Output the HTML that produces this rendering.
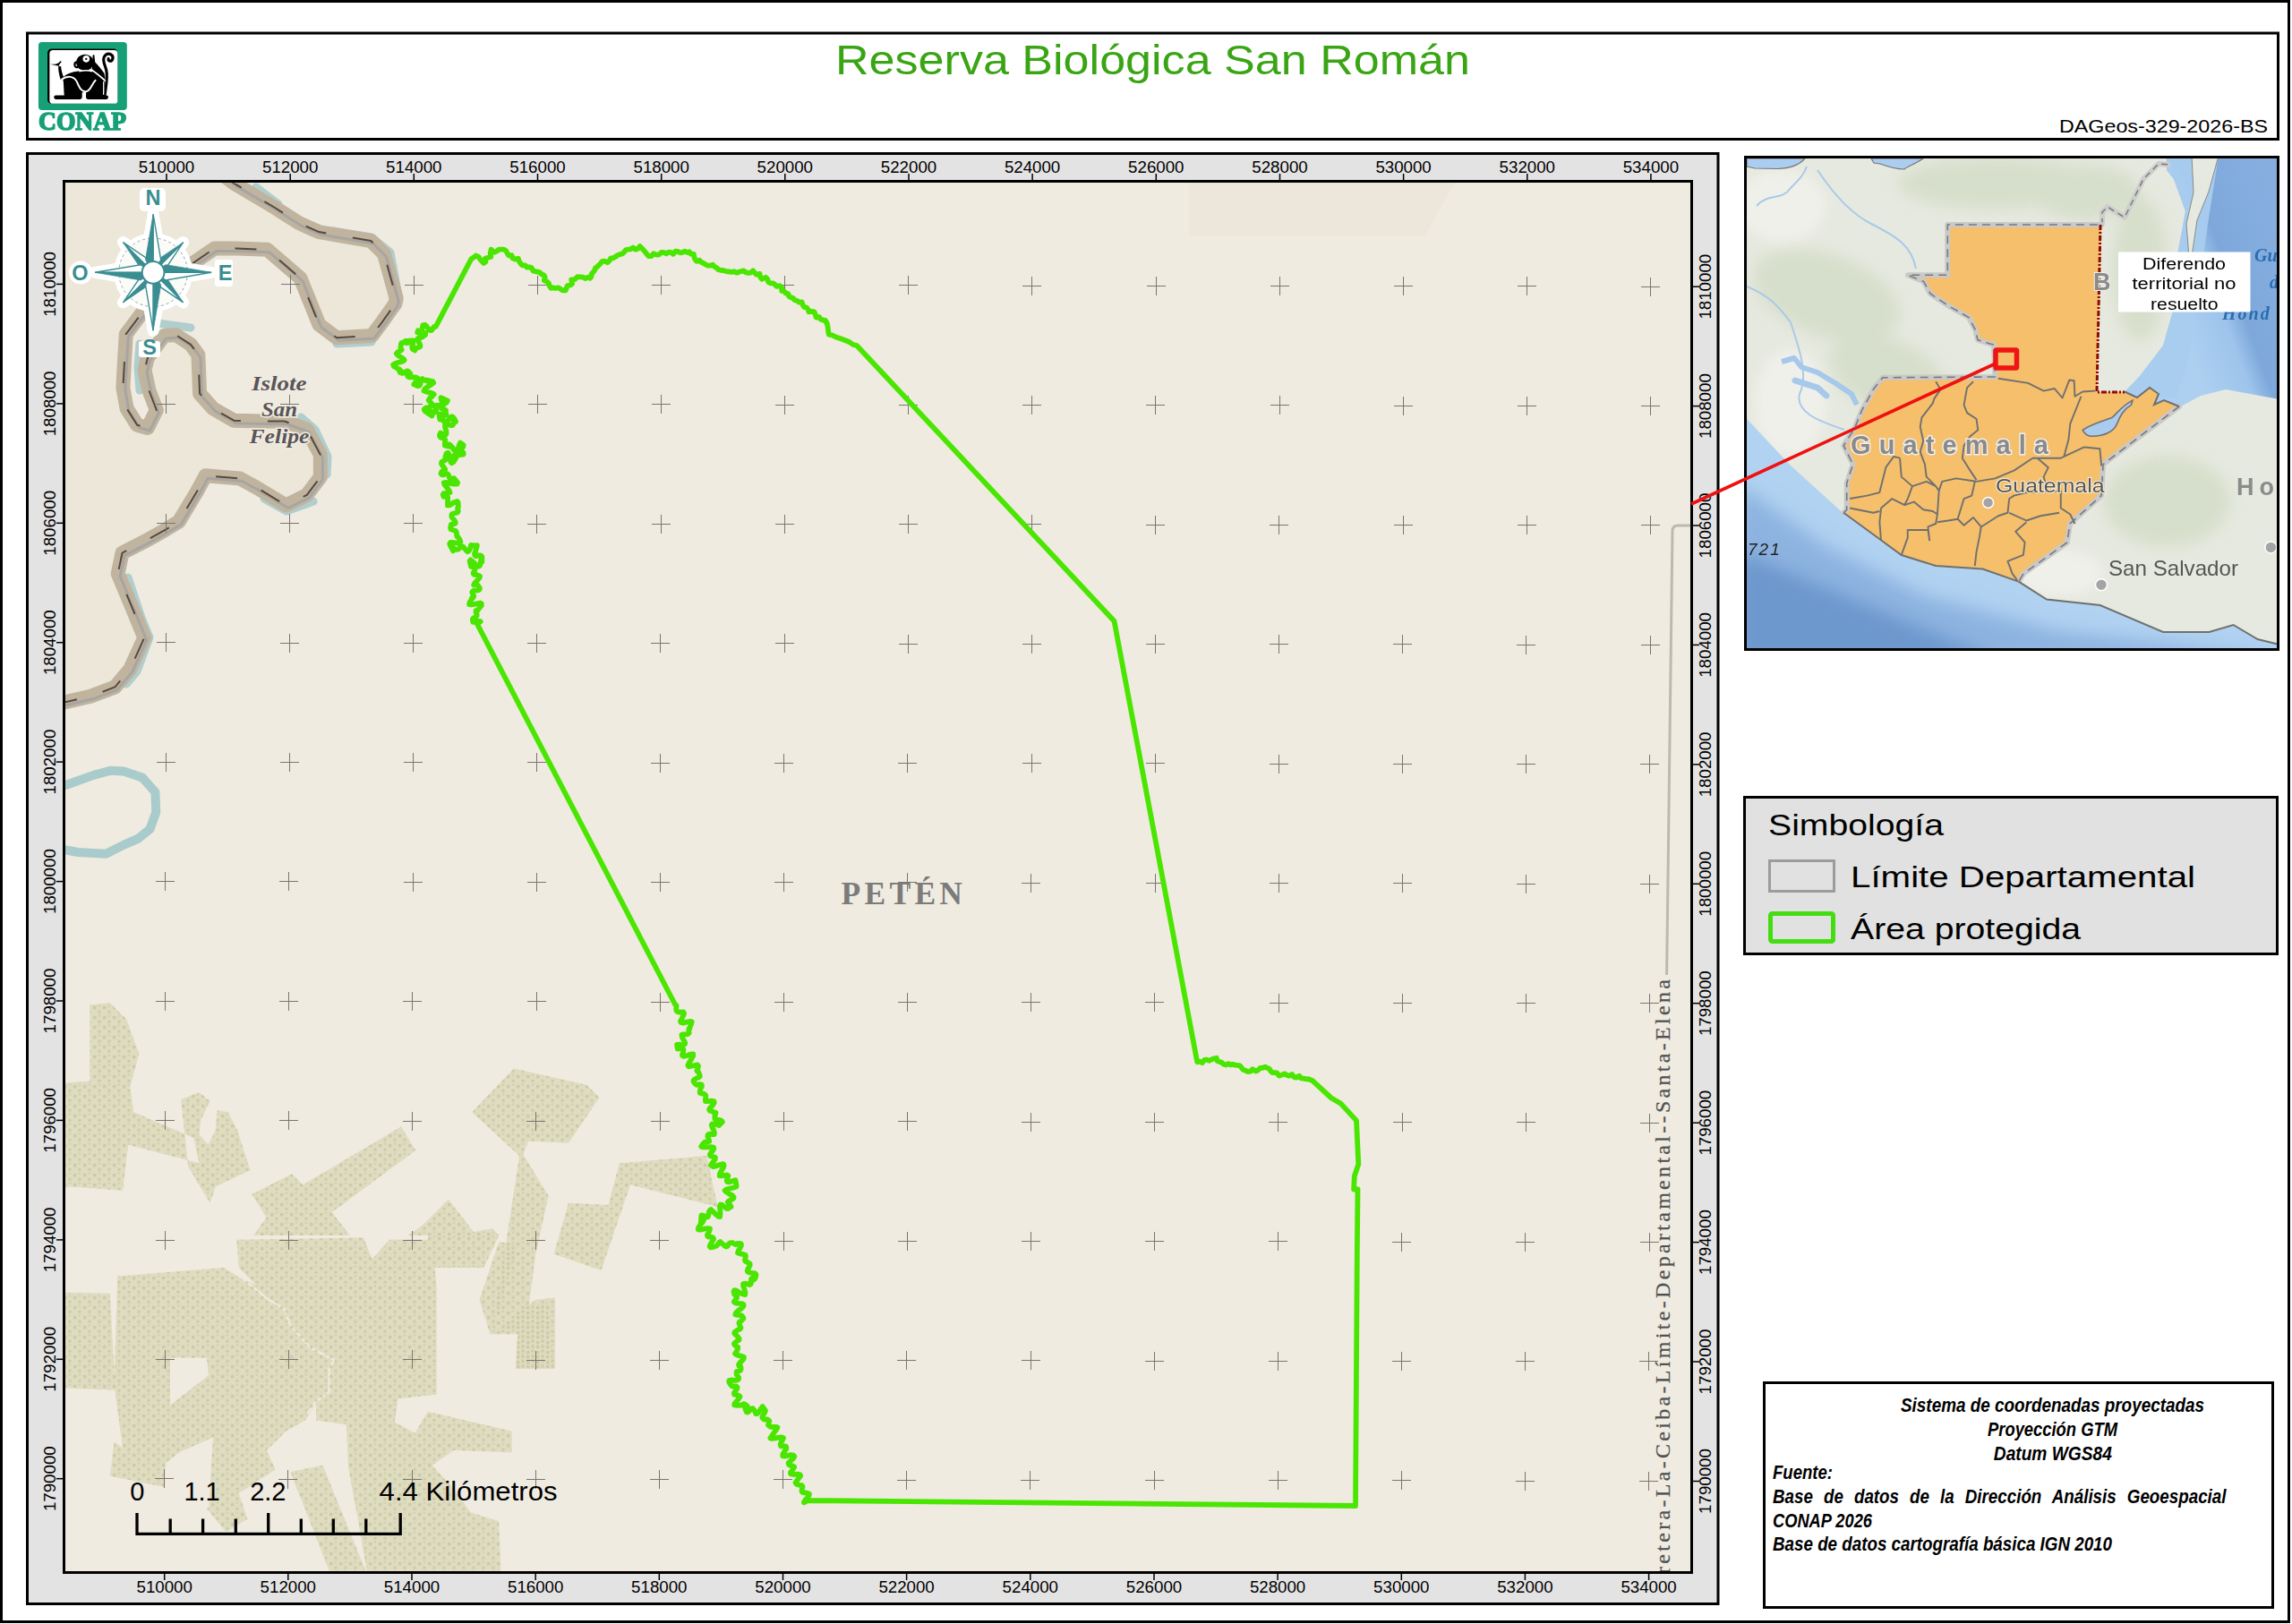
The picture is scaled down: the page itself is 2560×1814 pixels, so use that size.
<!DOCTYPE html>
<html><head><meta charset="utf-8"><style>
html,body{margin:0;padding:0;background:#fff;overflow:hidden;}
svg{display:block;}
</style></head><body>
<svg width="2560" height="1814" viewBox="0 0 2560 1814">
<defs><pattern id="dots1" width="27.07" height="27.07" patternUnits="userSpaceOnUse"><rect x="2.46" y="4.92" width="7.87" height="7.87" fill="#cac89f"/><rect x="15.99" y="17.22" width="7.38" height="6.40" fill="#cac89f"/><rect x="17.22" y="1.23" width="4.92" height="4.92" fill="#cfcda6"/></pattern><pattern id="dots2" width="45.84" height="45.84" patternUnits="userSpaceOnUse"><rect x="4.17" y="8.33" width="13.33" height="13.33" fill="#cac89f"/><rect x="27.09" y="29.17" width="12.50" height="10.83" fill="#cac89f"/><rect x="29.17" y="2.08" width="8.33" height="8.33" fill="#cfcda6"/></pattern></defs><rect x="0" y="0" width="2560" height="1814" fill="#ffffff"/>
<rect x="1.5" y="1.5" width="2555" height="1810" fill="none" stroke="#000" stroke-width="3"/>
<rect x="30.5" y="37" width="2514" height="118.5" fill="#fff" stroke="#000" stroke-width="3"/>
<text x="933" y="82.8" font-family='"Liberation Sans", sans-serif' font-size="46" fill="#3aa514" textLength="709" lengthAdjust="spacingAndGlyphs">Reserva Biológica San Román</text>
<text x="2300" y="147.8" font-family='"Liberation Sans", sans-serif' font-size="21" fill="#000" textLength="233" lengthAdjust="spacingAndGlyphs">DAGeos-329-2026-BS</text>
<rect x="30.5" y="171.5" width="1888.5" height="1620" fill="#e4e3e4" stroke="#000" stroke-width="3"/>
<defs><clipPath id="mapclip"><rect x="73" y="204" width="1815" height="1551"/></clipPath></defs>
<g clip-path="url(#mapclip)">
<rect x="73" y="204" width="1815" height="1551" fill="#efebe0"/>
<path d="M73.0,204.0 L250.0,196.0 L261.6,204.9 L307.1,232.0 L334.2,249.3 L347.8,255.4 L356.4,259.1 L414.3,269.0 L429.0,283.7 L442.6,333.0 L441.4,339.2 L426.6,360.1 L415.5,374.9 L376.1,377.3 L356.4,362.6 L335.5,310.8 L298.5,278.8 L264.0,277.6 L239.4,277.6 L216.0,293.6 L158.2,350.0 L140.8,373.2 L139.1,401.5 L137.4,433.1 L141.6,456.4 L153.2,474.7 L164.9,478.0 L174.8,458.0 L166.5,436.4 L161.5,413.1 L164.9,399.8 L183.2,374.9 L196.5,374.1 L213.1,384.9 L221.4,396.5 L223.1,439.7 L238.0,456.4 L261.3,469.7 L292.9,470.5 L317.8,470.5 L342.8,479.7 L357.8,507.9 L357.8,532.9 L342.8,552.8 L319.5,564.5 L286.3,544.5 L268.0,534.5 L229.7,531.2 L219.7,549.5 L199.8,582.7 L183.2,592.7 L161.3,604.9 L136.5,617.7 L131.7,640.9 L144.5,671.3 L161.3,712.2 L145.3,747.4 L128.5,767.4 L101.2,777.8 L70.0,785.0 L60.0,787.0 L73.0,787.0Z" fill="#e8e2d1" opacity="0.45"/>
<path d="M1328,204 L1625,204 L1591,264 L1328,264 Z" fill="#e8e2d2" opacity="0.4"/>
<defs><clipPath id="vegTop"><rect x="0" y="0" width="2000" height="1380"/></clipPath><clipPath id="vegBot"><rect x="0" y="1380" width="2000" height="500"/></clipPath></defs>
<g clip-path="url(#vegTop)"><g transform="translate(70,1100) scale(0.40642)"><path d="M75.0,55.0 L130.0,50.0 L175.0,95.0 L210.0,190.0 L185.0,280.0 L195.0,350.0 L360.0,420.0 L375.0,490.0 L180.0,440.0 L165.0,565.0 L20.0,555.0 L0.0,560.0 L0.0,270.0 L75.0,265.0ZM325.0,315.0 L375.0,295.0 L405.0,320.0 L380.0,370.0 L375.0,410.0 L400.0,440.0 L420.0,400.0 L425.0,345.0 L455.0,350.0 L480.0,400.0 L515.0,510.0 L420.0,555.0 L405.0,600.0 L345.0,500.0ZM480.0,700.0 L520.0,695.0 L560.0,640.0 L520.0,575.0 L630.0,520.0 L660.0,550.0 L930.0,390.0 L970.0,455.0 L740.0,625.0 L840.0,755.0 L880.0,740.0 L990.0,660.0 L1060.0,590.0 L1130.0,680.0 L1180.0,670.0 L1210.0,700.0 L1200.0,760.0 L480.0,760.0ZM1030.0,700.0 L1110.0,720.0 L1110.0,740.0 L1040.0,730.0ZM710.0,715.0 L745.0,715.0 L745.0,735.0 L710.0,735.0Z" fill="#dedcc1" fill-rule="evenodd"/></g></g>
<g transform="translate(70,1100) scale(0.40642)"><path d="M1240.0,230.0 L1440.0,275.0 L1475.0,310.0 L1390.0,435.0 L1280.0,430.0 L1265.0,465.0 L1335.0,580.0 L1300.0,740.0 L1280.0,890.0 L1330.0,870.0 L1350.0,1055.0 L1245.0,1055.0 L1250.0,960.0 L1180.0,960.0 L1200.0,830.0 L1240.0,570.0 L1255.0,470.0 L1125.0,350.0ZM1350.0,740.0 L1390.0,600.0 L1500.0,605.0 L1530.0,490.0 L1770.0,470.0 L1800.0,610.0 L1560.0,550.0 L1480.0,785.0Z" fill="#dedcc1"/></g>
<g clip-path="url(#vegBot)"><g transform="translate(70,1380) scale(0.23998)"><path d="M0.0,265.0 L220.0,270.0 L245.0,720.0 L0.0,710.0ZM255.0,190.0 L750.0,150.0 L830.0,200.0 L1030.0,340.0 L1060.0,430.0 L1140.0,510.0 L1270.0,580.0 L1240.0,620.0 L1240.0,730.0 L1180.0,780.0 L1130.0,860.0 L1040.0,910.0 L950.0,1000.0 L990.0,1090.0 L820.0,1200.0 L680.0,1270.0 L700.0,940.0 L540.0,1010.0 L480.0,1060.0 L470.0,1170.0 L220.0,1120.0 L240.0,960.0 L280.0,990.0 L240.0,700.0ZM810.0,20.0 L1400.0,10.0 L1440.0,110.0 L1520.0,20.0 L1720.0,20.0 L1740.0,240.0 L1740.0,740.0 L1560.0,760.0 L1545.0,870.0 L1640.0,920.0 L1700.0,820.0 L2090.0,910.0 L2090.0,1010.0 L1820.0,1000.0 L1720.0,1070.0 L1810.0,1170.0 L1900.0,1290.0 L2030.0,1330.0 L2040.0,1584.0 L1420.0,1584.0 L1370.0,1300.0 L1330.0,1080.0 L1320.0,880.0 L1180.0,860.0 L1180.0,780.0 L1240.0,730.0 L1240.0,620.0 L1270.0,580.0 L1140.0,510.0 L1060.0,430.0 L1030.0,340.0 L830.0,200.0 L900.0,230.0 L820.0,150.0ZM1060.0,1100.0 L1210.0,1070.0 L1420.0,1584.0 L1250.0,1584.0ZM670.0,1270.0 L820.0,1200.0 L860.0,1320.0 L760.0,1380.0ZM2030.0,30.0 L2120.0,40.0 L1995.0,460.0 L2200.0,300.0 L2292.0,290.0 L2292.0,620.0 L2110.0,620.0 L2120.0,440.0 L1990.0,460.0 L1940.0,300.0ZM1700.0,0.0 L2030.0,0.0 L1960.0,150.0 L1690.0,150.0ZM500.0,570.0 L670.0,570.0 L680.0,650.0 L500.0,790.0ZM1200.0,40.0 L1260.0,45.0 L1255.0,80.0 L1200.0,75.0Z" fill="#dedcc1" fill-rule="nonzero"/><path d="M500.0,570.0 L670.0,570.0 L680.0,650.0 L500.0,790.0Z" fill="#efebe0"/><path d="M830.0,195.0 L960.0,300.0 L1030.0,340.0 L1060.0,420.0 L1150.0,520.0 L1265.0,580.0 L1240.0,620.0 L1240.0,730.0 L1180.0,770.0 L1140.0,830.0" fill="none" stroke="#efebe0" stroke-width="9"/></g></g>
<g clip-path="url(#vegTop)" opacity="0.9"><g transform="translate(70,1100) scale(0.40642)"><path d="M75.0,55.0 L130.0,50.0 L175.0,95.0 L210.0,190.0 L185.0,280.0 L195.0,350.0 L360.0,420.0 L375.0,490.0 L180.0,440.0 L165.0,565.0 L20.0,555.0 L0.0,560.0 L0.0,270.0 L75.0,265.0ZM325.0,315.0 L375.0,295.0 L405.0,320.0 L380.0,370.0 L375.0,410.0 L400.0,440.0 L420.0,400.0 L425.0,345.0 L455.0,350.0 L480.0,400.0 L515.0,510.0 L420.0,555.0 L405.0,600.0 L345.0,500.0ZM480.0,700.0 L520.0,695.0 L560.0,640.0 L520.0,575.0 L630.0,520.0 L660.0,550.0 L930.0,390.0 L970.0,455.0 L740.0,625.0 L840.0,755.0 L880.0,740.0 L990.0,660.0 L1060.0,590.0 L1130.0,680.0 L1180.0,670.0 L1210.0,700.0 L1200.0,760.0 L480.0,760.0ZM1030.0,700.0 L1110.0,720.0 L1110.0,740.0 L1040.0,730.0ZM710.0,715.0 L745.0,715.0 L745.0,735.0 L710.0,735.0Z" fill="url(#dots1)" fill-rule="evenodd"/></g></g>
<g opacity="0.9"><g transform="translate(70,1100) scale(0.40642)"><path d="M1240.0,230.0 L1440.0,275.0 L1475.0,310.0 L1390.0,435.0 L1280.0,430.0 L1265.0,465.0 L1335.0,580.0 L1300.0,740.0 L1280.0,890.0 L1330.0,870.0 L1350.0,1055.0 L1245.0,1055.0 L1250.0,960.0 L1180.0,960.0 L1200.0,830.0 L1240.0,570.0 L1255.0,470.0 L1125.0,350.0ZM1350.0,740.0 L1390.0,600.0 L1500.0,605.0 L1530.0,490.0 L1770.0,470.0 L1800.0,610.0 L1560.0,550.0 L1480.0,785.0Z" fill="url(#dots1)"/></g></g>
<g clip-path="url(#vegBot)" opacity="0.9"><g transform="translate(70,1380) scale(0.23998)"><path d="M0.0,265.0 L220.0,270.0 L245.0,720.0 L0.0,710.0ZM255.0,190.0 L750.0,150.0 L830.0,200.0 L1030.0,340.0 L1060.0,430.0 L1140.0,510.0 L1270.0,580.0 L1240.0,620.0 L1240.0,730.0 L1180.0,780.0 L1130.0,860.0 L1040.0,910.0 L950.0,1000.0 L990.0,1090.0 L820.0,1200.0 L680.0,1270.0 L700.0,940.0 L540.0,1010.0 L480.0,1060.0 L470.0,1170.0 L220.0,1120.0 L240.0,960.0 L280.0,990.0 L240.0,700.0ZM810.0,20.0 L1400.0,10.0 L1440.0,110.0 L1520.0,20.0 L1720.0,20.0 L1740.0,240.0 L1740.0,740.0 L1560.0,760.0 L1545.0,870.0 L1640.0,920.0 L1700.0,820.0 L2090.0,910.0 L2090.0,1010.0 L1820.0,1000.0 L1720.0,1070.0 L1810.0,1170.0 L1900.0,1290.0 L2030.0,1330.0 L2040.0,1584.0 L1420.0,1584.0 L1370.0,1300.0 L1330.0,1080.0 L1320.0,880.0 L1180.0,860.0 L1180.0,780.0 L1240.0,730.0 L1240.0,620.0 L1270.0,580.0 L1140.0,510.0 L1060.0,430.0 L1030.0,340.0 L830.0,200.0 L900.0,230.0 L820.0,150.0ZM1060.0,1100.0 L1210.0,1070.0 L1420.0,1584.0 L1250.0,1584.0ZM670.0,1270.0 L820.0,1200.0 L860.0,1320.0 L760.0,1380.0ZM2030.0,30.0 L2120.0,40.0 L1995.0,460.0 L2200.0,300.0 L2292.0,290.0 L2292.0,620.0 L2110.0,620.0 L2120.0,440.0 L1990.0,460.0 L1940.0,300.0ZM1700.0,0.0 L2030.0,0.0 L1960.0,150.0 L1690.0,150.0ZM500.0,570.0 L670.0,570.0 L680.0,650.0 L500.0,790.0ZM1200.0,40.0 L1260.0,45.0 L1255.0,80.0 L1200.0,75.0Z" fill="url(#dots2)"/><path d="M500.0,570.0 L670.0,570.0 L680.0,650.0 L500.0,790.0Z" fill="#efebe0"/></g></g>
<path d="M60.0,881.0 L73.4,877.0 L104.5,865.9 L123.4,860.7 L138.1,861.6 L158.8,868.4 L173.4,884.8 L174.3,907.2 L167.4,926.2 L154.5,936.6 L139.0,943.4 L118.3,953.8 L87.2,952.0 L73.4,949.5 L60.0,948.0" fill="none" stroke="#a9cbcb" stroke-width="10" stroke-linejoin="round"/>
<path d="M286.0,209.0 L311.0,228.0" fill="none" stroke="#a8cbcb" stroke-width="9" stroke-linejoin="round" stroke-linecap="round" opacity="0.9"/>
<path d="M372.0,258.0 L415.0,265.0 L436.0,282.0 L446.0,335.0 L444.0,342.0" fill="none" stroke="#a8cbcb" stroke-width="9" stroke-linejoin="round" stroke-linecap="round" opacity="0.9"/>
<path d="M376.0,384.0 L415.0,382.0" fill="none" stroke="#a8cbcb" stroke-width="9" stroke-linejoin="round" stroke-linecap="round" opacity="0.9"/>
<path d="M176.0,361.0 L213.0,366.0" fill="none" stroke="#a8cbcb" stroke-width="9" stroke-linejoin="round" stroke-linecap="round" opacity="0.9"/>
<path d="M156.0,384.0 L154.0,410.0 L156.0,436.0" fill="none" stroke="#a8cbcb" stroke-width="9" stroke-linejoin="round" stroke-linecap="round" opacity="0.9"/>
<path d="M336.0,466.0 L352.0,480.0 L366.0,510.0 L365.0,530.0" fill="none" stroke="#a8cbcb" stroke-width="9" stroke-linejoin="round" stroke-linecap="round" opacity="0.9"/>
<path d="M295.0,557.0 L320.0,571.0 L350.0,560.0" fill="none" stroke="#a8cbcb" stroke-width="9" stroke-linejoin="round" stroke-linecap="round" opacity="0.9"/>
<path d="M143.0,645.0 L158.0,690.0 L167.0,712.0 L153.0,750.0 L141.0,764.0" fill="none" stroke="#a8cbcb" stroke-width="9" stroke-linejoin="round" stroke-linecap="round" opacity="0.9"/>
<path d="M250.0,196.0 L261.6,204.9 L307.1,232.0 L334.2,249.3 L347.8,255.4 L356.4,259.1 L414.3,269.0 L429.0,283.7 L442.6,333.0 L441.4,339.2 L426.6,360.1 L415.5,374.9 L376.1,377.3 L356.4,362.6 L335.5,310.8 L298.5,278.8 L264.0,277.6 L239.4,277.6 L216.0,293.6 L158.2,350.0 L140.8,373.2 L139.1,401.5 L137.4,433.1 L141.6,456.4 L153.2,474.7 L164.9,478.0 L174.8,458.0 L166.5,436.4 L161.5,413.1 L164.9,399.8 L183.2,374.9 L196.5,374.1 L213.1,384.9 L221.4,396.5 L223.1,439.7 L238.0,456.4 L261.3,469.7 L292.9,470.5 L317.8,470.5 L342.8,479.7 L357.8,507.9 L357.8,532.9 L342.8,552.8 L319.5,564.5 L286.3,544.5 L268.0,534.5 L229.7,531.2 L219.7,549.5 L199.8,582.7 L183.2,592.7 L161.3,604.9 L136.5,617.7 L131.7,640.9 L144.5,671.3 L161.3,712.2 L145.3,747.4 L128.5,767.4 L101.2,777.8 L70.0,785.0 L60.0,787.0" fill="none" stroke="#c0b49f" stroke-width="16" stroke-linejoin="round"/>
<path d="M250.0,196.0 L261.6,204.9 L307.1,232.0 L334.2,249.3 L347.8,255.4 L356.4,259.1 L414.3,269.0 L429.0,283.7 L442.6,333.0 L441.4,339.2 L426.6,360.1 L415.5,374.9 L376.1,377.3 L356.4,362.6 L335.5,310.8 L298.5,278.8 L264.0,277.6 L239.4,277.6 L216.0,293.6 L158.2,350.0 L140.8,373.2 L139.1,401.5 L137.4,433.1 L141.6,456.4 L153.2,474.7 L164.9,478.0 L174.8,458.0 L166.5,436.4 L161.5,413.1 L164.9,399.8 L183.2,374.9 L196.5,374.1 L213.1,384.9 L221.4,396.5 L223.1,439.7 L238.0,456.4 L261.3,469.7 L292.9,470.5 L317.8,470.5 L342.8,479.7 L357.8,507.9 L357.8,532.9 L342.8,552.8 L319.5,564.5 L286.3,544.5 L268.0,534.5 L229.7,531.2 L219.7,549.5 L199.8,582.7 L183.2,592.7 L161.3,604.9 L136.5,617.7 L131.7,640.9 L144.5,671.3 L161.3,712.2 L145.3,747.4 L128.5,767.4 L101.2,777.8 L70.0,785.0 L60.0,787.0" fill="none" stroke="#a7a5a2" stroke-width="3" stroke-linejoin="round" transform="translate(2.5,3)"/>
<path d="M250.0,196.0 L261.6,204.9 L307.1,232.0 L334.2,249.3 L347.8,255.4 L356.4,259.1 L414.3,269.0 L429.0,283.7 L442.6,333.0 L441.4,339.2 L426.6,360.1 L415.5,374.9 L376.1,377.3 L356.4,362.6 L335.5,310.8 L298.5,278.8 L264.0,277.6 L239.4,277.6 L216.0,293.6 L158.2,350.0 L140.8,373.2 L139.1,401.5 L137.4,433.1 L141.6,456.4 L153.2,474.7 L164.9,478.0 L174.8,458.0 L166.5,436.4 L161.5,413.1 L164.9,399.8 L183.2,374.9 L196.5,374.1 L213.1,384.9 L221.4,396.5 L223.1,439.7 L238.0,456.4 L261.3,469.7 L292.9,470.5 L317.8,470.5 L342.8,479.7 L357.8,507.9 L357.8,532.9 L342.8,552.8 L319.5,564.5 L286.3,544.5 L268.0,534.5 L229.7,531.2 L219.7,549.5 L199.8,582.7 L183.2,592.7 L161.3,604.9 L136.5,617.7 L131.7,640.9 L144.5,671.3 L161.3,712.2 L145.3,747.4 L128.5,767.4 L101.2,777.8 L70.0,785.0 L60.0,787.0" fill="none" stroke="#58483a" stroke-width="2" stroke-dasharray="24 30" stroke-linejoin="round"/>
<path d="M175.0,317.5h21M185.5,307.0v21M175.0,451.5h21M185.5,441.0v21M175.0,584.5h21M185.5,574.0v21M175.0,717.5h21M185.5,707.0v21M175.0,851.5h21M185.5,841.0v21M174.0,984.5h21M184.5,974.0v21M174.0,1118.5h21M184.5,1108.0v21M174.0,1251.5h21M184.5,1241.0v21M174.0,1385.5h21M184.5,1375.0v21M174.0,1518.5h21M184.5,1508.0v21M173.0,1651.5h21M183.5,1641.0v21M314.0,317.5h21M324.5,307.0v21M313.0,451.5h21M323.5,441.0v21M313.0,584.5h21M323.5,574.0v21M313.0,718.5h21M323.5,708.0v21M313.0,851.5h21M323.5,841.0v21M312.0,984.5h21M322.5,974.0v21M312.0,1118.5h21M322.5,1108.0v21M312.0,1251.5h21M322.5,1241.0v21M312.0,1385.5h21M322.5,1375.0v21M312.0,1518.5h21M322.5,1508.0v21M311.0,1652.5h21M321.5,1642.0v21M452.0,318.5h21M462.5,308.0v21M451.0,451.5h21M461.5,441.0v21M451.0,584.5h21M461.5,574.0v21M451.0,718.5h21M461.5,708.0v21M451.0,851.5h21M461.5,841.0v21M451.0,985.5h21M461.5,975.0v21M450.0,1118.5h21M460.5,1108.0v21M450.0,1252.5h21M460.5,1242.0v21M450.0,1385.5h21M460.5,1375.0v21M450.0,1518.5h21M460.5,1508.0v21M450.0,1652.5h21M460.5,1642.0v21M590.0,318.5h21M600.5,308.0v21M590.0,451.5h21M600.5,441.0v21M589.0,585.5h21M599.5,575.0v21M589.0,718.5h21M599.5,708.0v21M589.0,851.5h21M599.5,841.0v21M589.0,985.5h21M599.5,975.0v21M589.0,1118.5h21M599.5,1108.0v21M588.0,1252.5h21M598.5,1242.0v21M588.0,1385.5h21M598.5,1375.0v21M588.0,1519.5h21M598.5,1509.0v21M588.0,1652.5h21M598.5,1642.0v21M728.0,318.5h21M738.5,308.0v21M728.0,451.5h21M738.5,441.0v21M728.0,585.5h21M738.5,575.0v21M727.0,718.5h21M737.5,708.0v21M727.0,852.5h21M737.5,842.0v21M727.0,985.5h21M737.5,975.0v21M727.0,1119.5h21M737.5,1109.0v21M727.0,1252.5h21M737.5,1242.0v21M726.0,1385.5h21M736.5,1375.0v21M726.0,1519.5h21M736.5,1509.0v21M726.0,1652.5h21M736.5,1642.0v21M866.0,318.5h21M876.5,308.0v21M866.0,452.5h21M876.5,442.0v21M866.0,585.5h21M876.5,575.0v21M866.0,718.5h21M876.5,708.0v21M865.0,852.5h21M875.5,842.0v21M865.0,985.5h21M875.5,975.0v21M865.0,1119.5h21M875.5,1109.0v21M865.0,1252.5h21M875.5,1242.0v21M865.0,1386.5h21M875.5,1376.0v21M864.0,1519.5h21M874.5,1509.0v21M864.0,1652.5h21M874.5,1642.0v21M1004.0,318.5h21M1014.5,308.0v21M1004.0,452.5h21M1014.5,442.0v21M1004.0,585.5h21M1014.5,575.0v21M1004.0,719.5h21M1014.5,709.0v21M1003.0,852.5h21M1013.5,842.0v21M1003.0,985.5h21M1013.5,975.0v21M1003.0,1119.5h21M1013.5,1109.0v21M1003.0,1252.5h21M1013.5,1242.0v21M1003.0,1386.5h21M1013.5,1376.0v21M1002.0,1519.5h21M1012.5,1509.0v21M1002.0,1653.5h21M1012.5,1643.0v21M1142.0,319.5h21M1152.5,309.0v21M1142.0,452.5h21M1152.5,442.0v21M1142.0,585.5h21M1152.5,575.0v21M1142.0,719.5h21M1152.5,709.0v21M1142.0,852.5h21M1152.5,842.0v21M1141.0,986.5h21M1151.5,976.0v21M1141.0,1119.5h21M1151.5,1109.0v21M1141.0,1253.5h21M1151.5,1243.0v21M1141.0,1386.5h21M1151.5,1376.0v21M1141.0,1519.5h21M1151.5,1509.0v21M1140.0,1653.5h21M1150.5,1643.0v21M1281.0,319.5h21M1291.5,309.0v21M1280.0,452.5h21M1290.5,442.0v21M1280.0,586.5h21M1290.5,576.0v21M1280.0,719.5h21M1290.5,709.0v21M1280.0,852.5h21M1290.5,842.0v21M1280.0,986.5h21M1290.5,976.0v21M1279.0,1119.5h21M1289.5,1109.0v21M1279.0,1253.5h21M1289.5,1243.0v21M1279.0,1386.5h21M1289.5,1376.0v21M1279.0,1520.5h21M1289.5,1510.0v21M1279.0,1653.5h21M1289.5,1643.0v21M1419.0,319.5h21M1429.5,309.0v21M1419.0,452.5h21M1429.5,442.0v21M1418.0,586.5h21M1428.5,576.0v21M1418.0,719.5h21M1428.5,709.0v21M1418.0,853.5h21M1428.5,843.0v21M1418.0,986.5h21M1428.5,976.0v21M1418.0,1120.5h21M1428.5,1110.0v21M1417.0,1253.5h21M1427.5,1243.0v21M1417.0,1386.5h21M1427.5,1376.0v21M1417.0,1520.5h21M1427.5,1510.0v21M1417.0,1653.5h21M1427.5,1643.0v21M1557.0,319.5h21M1567.5,309.0v21M1557.0,453.5h21M1567.5,443.0v21M1557.0,586.5h21M1567.5,576.0v21M1556.0,719.5h21M1566.5,709.0v21M1556.0,853.5h21M1566.5,843.0v21M1556.0,986.5h21M1566.5,976.0v21M1556.0,1120.5h21M1566.5,1110.0v21M1556.0,1253.5h21M1566.5,1243.0v21M1555.0,1387.5h21M1565.5,1377.0v21M1555.0,1520.5h21M1565.5,1510.0v21M1555.0,1653.5h21M1565.5,1643.0v21M1695.0,319.5h21M1705.5,309.0v21M1695.0,453.5h21M1705.5,443.0v21M1695.0,586.5h21M1705.5,576.0v21M1694.0,720.5h21M1704.5,710.0v21M1694.0,853.5h21M1704.5,843.0v21M1694.0,987.5h21M1704.5,977.0v21M1694.0,1120.5h21M1704.5,1110.0v21M1694.0,1253.5h21M1704.5,1243.0v21M1693.0,1387.5h21M1703.5,1377.0v21M1693.0,1520.5h21M1703.5,1510.0v21M1693.0,1654.5h21M1703.5,1644.0v21M1833.0,320.5h21M1843.5,310.0v21M1833.0,453.5h21M1843.5,443.0v21M1833.0,586.5h21M1843.5,576.0v21M1833.0,720.5h21M1843.5,710.0v21M1832.0,853.5h21M1842.5,843.0v21M1832.0,987.5h21M1842.5,977.0v21M1832.0,1120.5h21M1842.5,1110.0v21M1832.0,1254.5h21M1842.5,1244.0v21M1832.0,1387.5h21M1842.5,1377.0v21M1831.0,1520.5h21M1841.5,1510.0v21M1831.0,1654.5h21M1841.5,1644.0v21" stroke="#7a766f" stroke-width="1" fill="none"/>
<text x="281" y="436.4" font-family='"Liberation Serif", serif' font-size="23" font-weight="bold" font-style="italic" fill="#59545a" stroke="#f0ece0" stroke-width="3" paint-order="stroke" lengthAdjust="spacingAndGlyphs" textLength="61.5">Islote</text><text x="292" y="465.3" font-family='"Liberation Serif", serif' font-size="23" font-weight="bold" font-style="italic" fill="#59545a" stroke="#f0ece0" stroke-width="3" paint-order="stroke" lengthAdjust="spacingAndGlyphs" textLength="40">San</text><text x="278.5" y="494.9" font-family='"Liberation Serif", serif' font-size="23" font-weight="bold" font-style="italic" fill="#59545a" stroke="#f0ece0" stroke-width="3" paint-order="stroke" lengthAdjust="spacingAndGlyphs" textLength="67">Felipe</text>
<text x="939.5" y="1010" font-family='"Liberation Serif", serif' font-size="35.5" font-weight="bold" fill="#7b7b7b" textLength="135.5" lengthAdjust="spacing">PETÉN</text>
<path d="M1889,587 L1874,587 Q1868,587 1868,593 L1861.6,1089" fill="none" stroke="#bcb9ae" stroke-width="3"/>
<text transform="translate(1865,1758) rotate(-90)" font-family='"Liberation Serif", serif' font-size="24" fill="#505050" stroke="#505050" stroke-width="0.25" textLength="664" lengthAdjust="spacing">retera-La-Ceiba-Límite-Departamental--Santa-Elena</text>
<path d="M486.7,364.8 L526.4,289.2 L529.1,287.5 L531.7,285.4 L534.7,287.1 L536.3,289.6 L538.3,291.9 L540.3,293.9 L542.5,292.3 L541.9,288.8 L545.1,287.8 L548.3,286.9 L547.7,283.4 L548.5,278.7 L552.0,281.7 L554.7,280.6 L557.3,278.6 L560.2,278.6 L562.9,278.6 L565.3,280.1 L566.5,282.8 L568.0,285.3 L571.6,285.2 L572.5,288.4 L575.2,289.5 L578.8,288.8 L579.9,292.0 L581.5,294.5 L583.5,296.3 L586.6,296.3 L588.5,298.5 L591.4,298.3 L593.8,299.3 L595.4,302.4 L598.0,303.1 L600.6,303.6 L603.1,304.5 L604.5,306.0 L607.4,307.3 L608.7,309.6 L607.8,313.3 L610.9,314.5 L612.9,316.4 L613.6,319.1 L615.4,321.8 L618.2,321.4 L620.7,322.0 L623.5,321.3 L625.9,322.7 L628.3,324.3 L631.8,324.3 L632.7,321.6 L633.8,319.0 L637.1,318.5 L639.1,316.8 L638.2,312.3 L641.9,312.2 L643.8,310.4 L645.1,309.2 L648.0,309.4 L650.9,309.6 L653.6,311.0 L656.8,309.7 L659.1,310.8 L660.6,308.7 L660.7,305.9 L662.6,304.0 L664.2,302.0 L664.9,299.5 L667.3,297.9 L668.5,296.5 L670.5,294.6 L672.3,292.1 L675.0,291.6 L678.5,293.2 L680.6,291.4 L682.2,288.5 L685.0,288.3 L687.4,286.8 L689.7,285.1 L692.3,284.1 L695.2,283.4 L697.3,281.4 L699.1,279.0 L702.0,278.5 L704.6,278.3 L707.0,276.5 L709.8,278.6 L712.4,277.9 L714.7,275.1 L717.1,277.3 L718.8,279.5 L720.8,281.5 L722.4,283.8 L724.7,286.2 L727.6,286.1 L730.1,283.3 L733.2,284.6 L736.1,284.4 L738.6,282.0 L741.6,282.0 L744.2,283.3 L746.7,281.6 L749.3,281.9 L752.0,283.8 L754.4,280.7 L757.0,280.9 L759.7,282.3 L762.3,281.9 L764.8,280.7 L767.5,282.0 L769.9,281.3 L771.3,283.5 L774.9,283.9 L775.3,287.0 L776.3,289.6 L778.2,291.8 L781.3,290.8 L783.3,292.9 L785.7,294.0 L787.9,295.3 L790.3,296.5 L793.0,296.7 L796.1,295.7 L798.0,297.9 L800.4,299.1 L802.4,301.1 L804.9,301.8 L807.6,302.0 L810.1,302.7 L812.4,303.3 L815.0,303.5 L817.6,303.9 L820.2,303.2 L822.8,304.6 L825.4,303.9 L828.0,302.9 L830.6,302.4 L833.2,304.4 L835.8,304.9 L838.4,304.6 L841.0,302.4 L843.0,304.8 L844.9,306.7 L848.5,305.9 L849.2,309.6 L850.9,311.8 L855.3,309.8 L857.2,311.6 L858.1,315.0 L860.4,316.3 L863.5,316.3 L865.6,317.9 L867.4,319.8 L870.9,319.2 L873.1,320.9 L873.2,324.9 L876.0,325.4 L877.6,327.6 L880.3,328.2 L881.3,331.1 L883.6,332.3 L886.0,333.3 L887.8,335.3 L890.5,336.0 L892.4,337.6 L895.7,337.5 L896.6,340.5 L898.0,342.9 L900.7,343.5 L902.5,345.5 L903.4,348.4 L907.1,347.8 L909.7,348.6 L910.7,351.5 L911.6,354.5 L915.1,354.1 L916.5,356.6 L918.9,357.5 L921.9,357.8 L923.0,360.6 L923.5,360.5 L924.5,364.7 L925.0,369.0 L925.7,373.6 L929.8,374.5 L933.6,376.5 L937.6,377.8 L941.6,379.2 L945.5,380.7 L949.4,382.5 L952.9,385.0 L957.0,386.0 L1244.5,693.7 L1337.2,1186.3 L1337.2,1186.1 L1339.8,1185.6 L1342.9,1187.2 L1345.0,1184.2 L1347.7,1183.6 L1350.7,1184.9 L1353.1,1183.4 L1355.7,1182.5 L1358.8,1181.8 L1359.5,1185.0 L1362.3,1186.1 L1364.4,1186.7 L1366.8,1188.8 L1369.3,1189.5 L1371.9,1188.1 L1374.4,1189.4 L1377.0,1188.9 L1379.4,1189.6 L1381.9,1189.8 L1384.8,1190.4 L1386.7,1192.6 L1388.6,1195.0 L1391.3,1195.8 L1393.9,1197.1 L1396.8,1196.7 L1399.0,1194.3 L1402.6,1196.5 L1405.2,1195.3 L1407.5,1193.0 L1410.4,1192.8 L1413.1,1191.7 L1415.5,1192.8 L1417.8,1193.9 L1419.2,1196.3 L1421.1,1198.0 L1423.5,1198.2 L1426.3,1198.5 L1428.7,1201.6 L1431.7,1200.8 L1434.6,1199.4 L1437.3,1200.9 L1440.0,1201.8 L1443.0,1200.1 L1445.3,1203.1 L1447.9,1203.6 L1451.2,1201.8 L1453.3,1204.4 L1456.0,1204.6 L1458.5,1205.3 L1461.3,1205.1 L1463.8,1206.3 L1466.3,1207.3 L1487.0,1226.5 L1497.3,1232.4 L1515.0,1251.6 L1517.3,1300.4 L1512.8,1313.7 L1512.1,1328.5 L1516.5,1328.5 L1516.5,1328.5 L1515.8,1400.0 L1514.0,1682.0 L902.5,1676.0 L897.9,1678.3 L898.9,1676.1 L901.7,1673.0 L903.4,1670.5 L903.9,1668.6 L902.0,1667.8 L899.7,1667.4 L896.6,1667.2 L895.6,1666.0 L895.5,1664.4 L896.0,1662.5 L896.5,1660.6 L895.8,1659.2 L893.2,1658.9 L890.8,1658.3 L889.2,1657.5 L888.5,1656.2 L890.4,1653.5 L892.5,1650.8 L894.2,1648.3 L893.4,1647.0 L890.9,1646.6 L886.3,1647.0 L883.2,1646.4 L882.9,1644.8 L884.8,1642.5 L886.2,1640.4 L887.2,1638.5 L885.4,1637.4 L882.4,1636.8 L880.9,1635.7 L880.6,1634.1 L883.2,1631.6 L886.0,1629.1 L887.3,1627.0 L886.5,1625.6 L883.1,1625.1 L876.5,1626.7 L874.2,1626.4 L874.4,1624.5 L875.9,1621.8 L878.1,1618.6 L878.3,1616.7 L877.7,1615.3 L874.8,1615.3 L872.1,1615.3 L871.6,1613.7 L872.2,1611.6 L873.8,1608.8 L875.0,1606.3 L873.5,1605.4 L870.1,1605.7 L866.2,1606.4 L862.3,1607.0 L860.4,1606.4 L862.3,1603.5 L864.5,1600.3 L867.3,1596.8 L868.4,1594.3 L866.4,1593.8 L863.4,1593.9 L860.5,1593.9 L859.4,1592.7 L858.0,1591.8 L858.7,1589.6 L859.3,1587.4 L858.3,1586.2 L856.9,1585.3 L853.6,1585.5 L852.1,1584.6 L851.3,1583.3 L852.1,1581.0 L854.1,1578.0 L855.0,1575.6 L851.7,1571.1 L849.7,1573.9 L847.7,1576.9 L845.8,1579.2 L844.2,1579.2 L843.2,1576.5 L842.0,1574.6 L840.7,1573.1 L839.1,1573.4 L837.2,1575.8 L835.4,1577.5 L833.9,1577.4 L832.8,1574.7 L831.9,1571.3 L830.9,1568.1 L834.4,1570.2 L832.2,1569.5 L828.1,1569.5 L823.2,1569.9 L820.2,1569.5 L820.6,1567.6 L823.0,1564.9 L825.3,1562.2 L826.5,1560.0 L825.2,1558.8 L823.0,1558.1 L820.2,1557.6 L819.9,1556.0 L821.5,1553.6 L823.3,1551.1 L823.5,1549.4 L821.8,1548.3 L817.6,1548.5 L815.2,1545.6 L814.2,1543.4 L814.5,1541.9 L817.2,1541.5 L821.3,1541.8 L824.0,1541.4 L825.1,1540.2 L825.1,1538.5 L822.9,1535.7 L822.5,1533.7 L822.6,1532.1 L824.9,1531.5 L827.0,1530.8 L827.6,1529.4 L827.5,1527.6 L826.9,1525.6 L825.3,1525.6 L825.1,1524.1 L826.5,1522.0 L829.2,1519.6 L830.7,1517.5 L830.9,1515.8 L828.3,1514.9 L825.3,1514.1 L822.5,1513.3 L821.0,1512.0 L822.3,1510.0 L823.4,1508.1 L824.2,1506.2 L824.1,1504.6 L822.0,1503.5 L820.6,1502.3 L819.9,1500.8 L821.9,1499.0 L823.5,1497.8 L825.5,1496.7 L825.6,1495.2 L824.1,1493.2 L822.0,1491.2 L820.2,1489.2 L820.7,1487.7 L822.4,1486.6 L824.1,1485.4 L826.8,1484.5 L827.5,1483.1 L826.6,1481.3 L826.1,1479.6 L825.4,1477.9 L826.0,1476.5 L828.0,1475.4 L829.0,1474.1 L830.4,1472.9 L830.0,1471.2 L828.2,1469.4 L824.7,1468.9 L821.3,1468.4 L821.9,1466.6 L824.2,1464.2 L828.6,1461.1 L830.5,1458.8 L830.5,1457.2 L828.4,1456.2 L824.3,1455.9 L821.2,1455.3 L819.9,1454.1 L821.2,1452.0 L823.0,1449.8 L823.1,1448.1 L820.1,1445.7 L819.5,1442.7 L820.2,1441.1 L822.6,1441.6 L826.6,1444.2 L829.7,1445.5 L832.2,1446.1 L832.5,1444.1 L831.6,1440.6 L830.2,1436.6 L830.1,1434.1 L831.8,1433.7 L833.9,1433.9 L836.9,1435.1 L838.4,1434.5 L839.0,1432.9 L838.8,1430.3 L839.2,1428.4 L840.5,1427.5 L842.6,1429.1 L843.8,1426.8 L844.4,1424.8 L844.3,1423.2 L842.9,1422.1 L840.1,1421.9 L837.4,1421.5 L835.4,1420.8 L834.7,1419.5 L835.3,1417.5 L836.8,1415.0 L837.8,1412.8 L837.4,1411.3 L835.7,1410.5 L834.2,1409.5 L832.3,1408.8 L832.0,1407.2 L832.5,1405.3 L832.9,1403.4 L832.6,1401.8 L830.5,1401.2 L828.2,1400.7 L826.0,1400.1 L824.0,1399.4 L824.7,1397.3 L826.0,1395.0 L827.4,1392.6 L828.0,1390.6 L827.6,1389.1 L824.8,1388.8 L823.2,1389.1 L821.8,1390.2 L820.1,1389.4 L818.4,1388.2 L816.9,1388.2 L815.4,1388.3 L814.0,1389.4 L812.8,1391.7 L811.4,1392.5 L809.8,1391.9 L808.0,1390.1 L806.2,1388.8 L804.4,1387.1 L803.0,1388.0 L801.8,1389.9 L800.5,1391.6 L797.0,1392.9 L793.6,1393.3 L792.6,1392.1 L793.7,1389.6 L795.5,1386.7 L797.1,1384.0 L796.4,1382.6 L794.9,1381.8 L792.2,1381.7 L790.4,1381.0 L789.9,1379.5 L791.6,1376.7 L792.6,1374.3 L792.9,1372.4 L790.4,1372.1 L786.5,1372.7 L782.2,1373.7 L779.8,1373.4 L780.0,1371.5 L781.8,1368.6 L785.0,1364.8 L786.1,1362.3 L785.7,1360.8 L782.6,1366.7 L783.1,1364.0 L783.1,1360.3 L783.5,1357.5 L785.2,1357.7 L787.2,1358.2 L789.4,1359.5 L790.8,1359.1 L791.5,1356.9 L791.8,1353.7 L792.7,1352.1 L794.0,1351.1 L796.8,1353.7 L799.7,1356.6 L802.4,1358.9 L804.1,1359.1 L804.4,1356.0 L804.4,1352.1 L803.9,1347.4 L804.7,1345.5 L806.6,1345.9 L809.2,1348.0 L811.7,1349.9 L813.4,1350.0 L816.5,1347.8 L815.6,1346.1 L814.0,1344.3 L812.8,1342.6 L814.2,1341.3 L816.7,1340.1 L819.1,1338.8 L819.6,1337.4 L818.4,1335.6 L814.7,1333.6 L811.5,1331.6 L809.6,1329.8 L811.3,1328.5 L815.4,1327.5 L819.4,1326.5 L822.5,1325.4 L822.5,1323.8 L821.4,1318.3 L817.9,1319.3 L814.2,1320.4 L812.1,1320.2 L811.7,1318.5 L812.6,1315.8 L813.3,1313.2 L811.8,1312.5 L808.9,1312.9 L806.0,1313.3 L803.7,1313.3 L804.0,1311.1 L805.7,1307.7 L808.1,1303.7 L808.6,1301.3 L807.7,1300.1 L804.2,1301.0 L800.5,1302.1 L796.8,1303.2 L794.0,1301.5 L795.4,1299.2 L797.4,1296.7 L798.8,1294.4 L798.9,1292.7 L796.5,1292.0 L793.7,1291.5 L792.8,1290.2 L793.5,1288.2 L796.0,1285.4 L797.3,1283.2 L797.1,1281.6 L794.0,1281.2 L789.7,1281.3 L785.5,1281.4 L783.2,1280.7 L784.6,1278.4 L787.4,1275.6 L790.1,1275.3 L792.2,1275.0 L791.7,1272.5 L790.4,1269.4 L790.6,1267.6 L792.0,1266.7 L795.2,1267.2 L797.7,1267.2 L798.0,1265.4 L797.1,1262.6 L795.6,1259.4 L794.7,1256.6 L795.7,1255.4 L798.8,1255.8 L802.9,1257.1 L806.9,1253.2 L806.1,1251.9 L803.9,1251.1 L801.1,1250.6 L798.6,1250.0 L798.3,1248.4 L798.4,1246.7 L799.0,1244.8 L799.5,1242.8 L796.9,1242.2 L795.3,1241.3 L792.8,1240.6 L792.1,1239.2 L793.8,1236.8 L796.5,1233.9 L797.7,1231.7 L797.5,1230.1 L794.4,1229.7 L790.6,1230.1 L788.0,1230.2 L787.8,1228.3 L788.1,1226.1 L788.3,1223.8 L787.4,1222.6 L786.0,1221.7 L784.0,1221.3 L781.8,1221.0 L781.8,1219.0 L782.2,1216.7 L783.9,1213.4 L783.7,1211.5 L781.6,1211.2 L778.2,1211.8 L776.5,1210.7 L774.9,1208.7 L774.5,1207.1 L775.6,1205.7 L777.5,1204.7 L779.8,1203.7 L781.7,1202.5 L781.6,1201.0 L780.9,1199.2 L780.2,1197.5 L779.2,1197.1 L778.3,1195.8 L779.6,1192.8 L780.0,1190.5 L778.9,1189.4 L775.5,1190.2 L772.5,1190.7 L769.2,1191.3 L768.4,1189.9 L769.7,1187.0 L772.3,1182.9 L774.2,1179.4 L774.2,1177.5 L771.5,1177.6 L767.4,1179.0 L763.6,1180.0 L762.1,1179.2 L762.2,1177.2 L763.3,1174.3 L763.3,1172.3 L762.7,1170.9 L760.0,1171.0 L756.8,1171.6 L756.1,1166.8 L758.8,1166.7 L762.6,1167.4 L764.4,1166.7 L765.3,1165.5 L764.6,1163.3 L762.7,1160.3 L761.7,1157.9 L761.4,1155.9 L763.4,1155.4 L766.0,1155.3 L768.4,1155.0 L769.6,1154.0 L769.5,1152.1 L769.3,1150.3 L769.7,1148.7 L770.5,1148.6 L770.9,1146.4 L772.1,1143.6 L772.7,1141.2 L770.3,1141.0 L766.8,1141.6 L762.8,1142.6 L760.7,1142.2 L760.0,1140.8 L761.7,1137.5 L763.1,1134.6 L764.1,1131.9 L763.4,1130.5 L760.6,1130.6 L758.1,1130.5 L756.2,1129.9 L755.3,1128.3 L755.2,1126.6 L755.4,1124.8 L755.5,1123.0 L754.0,1122.0 L533.0,697.0 L536.7,694.2 L534.6,693.8 L531.2,694.5 L528.2,694.8 L527.9,691.3 L529.2,690.1 L531.0,689.3 L532.4,688.1 L532.7,686.5 L531.6,684.0 L531.6,682.1 L531.8,683.9 L534.4,680.4 L537.8,676.4 L537.8,674.4 L536.2,673.5 L531.2,674.6 L526.6,675.5 L524.1,675.1 L524.5,672.9 L526.7,669.7 L526.8,668.2 L528.6,667.4 L529.2,665.9 L528.0,663.5 L527.3,661.4 L528.2,660.1 L530.9,659.7 L533.7,659.3 L535.6,658.5 L535.9,656.9 L533.8,654.1 L531.2,651.0 L529.2,653.4 L530.3,651.2 L532.8,648.5 L535.5,645.6 L536.0,643.7 L534.2,642.8 L532.2,642.0 L529.1,641.6 L528.6,640.1 L529.8,638.0 L530.5,636.0 L531.0,634.1 L528.8,633.3 L526.0,632.8 L524.6,626.7 L525.7,625.4 L528.1,627.3 L530.8,629.9 L533.3,632.2 L535.1,632.6 L536.3,631.3 L536.8,628.5 L537.2,625.2 L538.3,624.0 L538.3,627.6 L538.2,625.5 L538.5,623.0 L538.1,621.3 L536.8,620.4 L534.6,620.4 L531.6,621.2 L530.3,620.3 L530.1,618.4 L531.3,615.0 L532.4,611.7 L532.8,609.1 L530.3,609.5 L526.0,609.0 L525.0,613.1 L523.7,615.4 L522.3,616.2 L520.6,614.8 L518.8,612.5 L517.0,610.4 L515.5,610.3 L514.1,611.1 L512.7,613.0 L511.3,613.8 L509.8,613.8 L508.2,613.4 L506.5,611.8 L504.9,611.1 L506.0,615.4 L504.9,612.8 L503.0,609.7 L502.2,607.4 L503.1,606.0 L506.3,606.0 L510.6,606.7 L513.5,606.5 L514.4,605.1 L513.5,602.7 L511.9,600.2 L510.4,599.3 L510.1,597.8 L510.1,596.0 L509.8,594.4 L509.0,593.1 L507.1,592.5 L505.6,591.7 L503.5,591.2 L503.0,589.7 L503.7,587.6 L503.7,585.8 L506.7,585.4 L508.7,584.6 L508.6,582.9 L507.2,580.6 L504.7,577.9 L504.3,576.0 L504.6,574.5 L506.3,573.5 L509.1,573.0 L511.2,572.3 L511.8,570.9 L511.1,568.9 L511.1,567.2 L511.9,566.5 L511.8,563.8 L511.6,561.2 L510.6,560.0 L508.0,560.9 L505.2,562.4 L501.9,564.4 L500.0,564.4 L500.1,561.4 L500.2,558.4 L500.1,555.7 L499.5,553.8 L497.4,554.2 L495.5,554.8 L494.7,552.6 L495.4,551.2 L498.1,551.0 L500.7,550.7 L502.6,550.1 L501.5,547.7 L499.3,544.7 L496.5,541.3 L495.8,539.2 L498.5,539.0 L502.9,539.8 L507.5,540.6 L510.6,540.6 L511.1,539.2 L506.9,534.1 L504.6,535.0 L502.8,535.0 L501.9,533.7 L501.4,531.6 L500.6,530.1 L499.4,529.1 L497.5,529.3 L495.0,530.5 L493.5,530.2 L492.5,528.9 L493.4,526.7 L496.3,525.9 L497.3,524.5 L496.1,522.4 L494.3,520.1 L493.0,518.0 L493.2,516.3 L494.7,515.1 L497.1,514.1 L498.4,512.9 L497.3,510.8 L498.5,506.4 L500.3,505.8 L501.6,507.6 L502.5,511.4 L503.3,516.0 L504.7,517.2 L506.6,515.9 L508.9,512.1 L511.4,507.6 L506.7,509.8 L507.5,508.5 L510.8,508.2 L514.5,508.0 L517.5,507.6 L517.7,506.1 L515.8,503.7 L515.1,501.8 L515.4,500.3 L517.2,499.4 L517.7,497.2 L515.8,495.7 L514.1,494.6 L512.9,497.0 L511.9,500.5 L510.7,503.2 L509.4,504.9 L507.5,503.0 L505.4,500.0 L503.4,497.6 L501.7,496.3 L504.0,499.2 L501.4,498.7 L498.9,498.2 L496.8,497.5 L497.0,495.6 L496.9,493.9 L497.4,491.9 L496.9,490.4 L495.3,489.4 L492.6,489.0 L491.4,487.8 L490.9,486.3 L492.0,483.5 L495.6,485.3 L497.9,485.6 L498.6,483.9 L498.4,481.3 L497.0,477.1 L497.1,474.7 L498.5,474.0 L500.9,474.4 L503.5,475.0 L505.5,475.0 L506.4,473.5 L506.7,471.4 L506.6,468.9 L509.1,471.0 L507.9,468.5 L506.6,466.6 L505.2,465.3 L503.6,465.7 L501.8,467.6 L499.8,470.6 L498.1,471.9 L496.6,471.7 L495.3,469.6 L494.2,466.7 L492.9,465.0 L491.4,464.4 L491.4,468.7 L490.8,466.0 L490.7,463.8 L491.6,462.5 L494.3,463.1 L497.1,463.8 L498.5,463.1 L497.9,460.3 L498.0,458.3 L495.2,457.3 L492.9,456.1 L493.3,454.3 L495.6,452.0 L498.8,449.5 L499.9,447.6 L492.4,444.2 L493.0,446.9 L494.0,450.0 L494.5,452.7 L492.6,452.9 L490.6,453.0 L488.2,452.7 L486.4,453.1 L486.3,455.1 L487.2,458.1 L486.9,460.0 L485.5,460.7 L482.9,460.2 L479.6,459.1 L476.8,458.3 L475.3,459.0 L482.5,464.5 L479.8,462.7 L476.8,460.8 L474.4,458.9 L473.7,457.3 L475.1,455.9 L479.2,454.9 L481.9,453.7 L483.4,452.4 L481.9,450.6 L480.4,448.9 L478.7,447.2 L479.5,445.7 L480.5,444.3 L482.4,443.0 L484.7,440.4 L482.9,439.2 L479.5,438.4 L476.2,437.6 L473.5,436.6 L474.2,434.8 L477.0,432.5 L481.0,430.0 L484.2,427.6 L483.4,426.2 L479.9,425.4 L476.7,424.5 L478.1,425.9 L476.1,425.3 L474.1,424.8 L471.7,423.1 L470.5,424.1 L469.9,426.6 L469.4,429.4 L468.4,430.9 L466.9,431.2 L462.3,429.4 L464.2,426.8 L466.1,424.2 L466.4,422.4 L464.6,421.5 L461.1,421.4 L457.3,421.3 L455.5,420.5 L454.9,419.0 L458.3,417.2 L456.7,415.5 L455.2,414.3 L453.6,414.9 L452.0,415.4 L450.5,416.7 L448.9,417.0 L447.3,415.5 L445.8,413.5 L446.9,416.1 L447.8,414.6 L446.6,412.9 L442.8,410.9 L439.8,409.0 L439.1,407.4 L441.5,406.0 L445.2,404.8 L449.8,403.7 L451.6,402.2 L450.5,400.6 L447.3,398.6 L444.2,396.7 L442.8,395.0 L444.0,393.6 L446.3,392.2 L448.6,390.8 L447.8,389.2 L447.5,388.0 L447.8,386.2 L447.9,384.2 L448.7,382.8 L450.5,382.5 L453.0,382.9 L455.4,383.2 L456.6,382.3 L452.6,380.9 L455.6,380.8 L459.1,380.3 L461.5,380.5 L461.4,382.4 L461.3,384.3 L460.3,386.8 L460.3,388.7 L460.9,390.1 L462.7,390.7 L463.4,391.4 L463.4,389.5 L465.4,388.7 L467.5,388.0 L469.4,387.2 L469.3,385.3 L468.1,382.9 L466.9,380.4 L466.4,378.2 L468.1,377.3 L470.9,377.0 L475.3,373.8 L475.2,371.8 L473.0,371.7 L470.1,372.1 L468.1,371.8 L466.2,371.5 L466.9,369.3 L469.4,371.2 L471.0,370.3 L471.7,366.7 L472.4,363.1 L474.9,363.0 L476.8,364.9 L478.8,367.7 L480.6,369.1 L482.2,368.8 L483.6,366.7 L485.0,364.8 L486.7,364.8Z" fill="none" stroke="#4ae602" stroke-width="5.8" stroke-linejoin="round"/>
<circle cx="171.1" cy="304.3" r="44" fill="#fff"/>
<path d="M171.1,304.3 L162.5,290.3 L171.1,239.3 L179.7,290.3Z" fill="#fff" stroke="#fff" stroke-width="13" stroke-linejoin="round"/>
<path d="M171.1,304.3 L175.6,290.4 L204.7,270.7 L185.0,299.8Z" fill="#fff" stroke="#fff" stroke-width="13" stroke-linejoin="round"/>
<path d="M171.1,304.3 L185.1,295.7 L236.1,304.3 L185.1,312.9Z" fill="#fff" stroke="#fff" stroke-width="13" stroke-linejoin="round"/>
<path d="M171.1,304.3 L185.0,308.8 L204.7,337.9 L175.6,318.2Z" fill="#fff" stroke="#fff" stroke-width="13" stroke-linejoin="round"/>
<path d="M171.1,304.3 L179.7,318.3 L171.1,369.3 L162.5,318.3Z" fill="#fff" stroke="#fff" stroke-width="13" stroke-linejoin="round"/>
<path d="M171.1,304.3 L166.6,318.2 L137.5,337.9 L157.2,308.8Z" fill="#fff" stroke="#fff" stroke-width="13" stroke-linejoin="round"/>
<path d="M171.1,304.3 L157.1,312.9 L106.1,304.3 L157.1,295.7Z" fill="#fff" stroke="#fff" stroke-width="13" stroke-linejoin="round"/>
<path d="M171.1,304.3 L157.2,299.8 L137.5,270.7 L166.6,290.4Z" fill="#fff" stroke="#fff" stroke-width="13" stroke-linejoin="round"/>
<rect x="156" y="210" width="29" height="26" rx="5" fill="#fff"/>
<circle cx="90" cy="304.5" r="13" fill="#fff"/>
<rect x="240" y="290" width="20" height="30" rx="3" fill="#fff"/>
<rect x="155" y="381" width="24" height="18" rx="3" fill="#fff"/>
<circle cx="171.1" cy="304.3" r="38.3" fill="#fbfbf8" stroke="#8fa9a9" stroke-width="1" stroke-dasharray="3 3"/>
<path d="M171.1,304.3 L185.0,299.8 L204.7,270.7Z" fill="#fff" stroke="#3a8e92" stroke-width="1.4" stroke-linejoin="miter"/>
<path d="M171.1,304.3 L175.6,290.4 L204.7,270.7Z" fill="#3a8e92" stroke="#3a8e92" stroke-width="0.8"/>
<path d="M171.1,304.3 L175.6,318.2 L204.7,337.9Z" fill="#fff" stroke="#3a8e92" stroke-width="1.4" stroke-linejoin="miter"/>
<path d="M171.1,304.3 L185.0,308.8 L204.7,337.9Z" fill="#3a8e92" stroke="#3a8e92" stroke-width="0.8"/>
<path d="M171.1,304.3 L157.2,308.8 L137.5,337.9Z" fill="#fff" stroke="#3a8e92" stroke-width="1.4" stroke-linejoin="miter"/>
<path d="M171.1,304.3 L166.6,318.2 L137.5,337.9Z" fill="#3a8e92" stroke="#3a8e92" stroke-width="0.8"/>
<path d="M171.1,304.3 L166.6,290.4 L137.5,270.7Z" fill="#fff" stroke="#3a8e92" stroke-width="1.4" stroke-linejoin="miter"/>
<path d="M171.1,304.3 L157.2,299.8 L137.5,270.7Z" fill="#3a8e92" stroke="#3a8e92" stroke-width="0.8"/>
<path d="M171.1,304.3 L179.7,290.3 L171.1,239.3Z" fill="#fff" stroke="#3a8e92" stroke-width="1.4" stroke-linejoin="miter"/>
<path d="M171.1,304.3 L162.5,290.3 L171.1,239.3Z" fill="#3a8e92" stroke="#3a8e92" stroke-width="0.8"/>
<path d="M171.1,304.3 L185.1,312.9 L236.1,304.3Z" fill="#fff" stroke="#3a8e92" stroke-width="1.4" stroke-linejoin="miter"/>
<path d="M171.1,304.3 L185.1,295.7 L236.1,304.3Z" fill="#3a8e92" stroke="#3a8e92" stroke-width="0.8"/>
<path d="M171.1,304.3 L162.5,318.3 L171.1,369.3Z" fill="#fff" stroke="#3a8e92" stroke-width="1.4" stroke-linejoin="miter"/>
<path d="M171.1,304.3 L179.7,318.3 L171.1,369.3Z" fill="#3a8e92" stroke="#3a8e92" stroke-width="0.8"/>
<path d="M171.1,304.3 L157.1,295.7 L106.1,304.3Z" fill="#fff" stroke="#3a8e92" stroke-width="1.4" stroke-linejoin="miter"/>
<path d="M171.1,304.3 L157.1,312.9 L106.1,304.3Z" fill="#3a8e92" stroke="#3a8e92" stroke-width="0.8"/>
<circle cx="171.1" cy="304.3" r="12.4" fill="#fff" stroke="#3a8e92" stroke-width="2"/>
<text x="171" y="228.7" font-family='"Liberation Sans", sans-serif' font-weight="bold" font-size="23.5" fill="#3a8e92" text-anchor="middle">N</text>
<text x="89.5" y="313" font-family='"Liberation Sans", sans-serif' font-weight="bold" font-size="23.5" fill="#3a8e92" text-anchor="middle">O</text>
<text x="251.5" y="312.5" font-family='"Liberation Sans", sans-serif' font-weight="bold" font-size="23.5" fill="#3a8e92" text-anchor="middle">E</text>
<text x="167" y="396" font-family='"Liberation Sans", sans-serif' font-weight="bold" font-size="23.5" fill="#3a8e92" text-anchor="middle" font-size="20">S</text>
<path d="M153,1690 V1713.3 H447.2 V1690 M299.7,1690 V1713 M190.2,1696.4 V1713 M226.6,1696.4 V1713 M263.3,1696.4 V1713 M336.3,1696.4 V1713 M372.3,1696.4 V1713 M408.8,1696.4 V1713" fill="none" stroke="#000" stroke-width="3.3"/>
<text x="153.3" y="1675.6" font-family='"Liberation Sans", sans-serif' font-size="29" fill="#000" text-anchor="middle">0</text>
<text x="225.6" y="1675.6" font-family='"Liberation Sans", sans-serif' font-size="29" fill="#000" text-anchor="middle">1.1</text>
<text x="299.3" y="1675.6" font-family='"Liberation Sans", sans-serif' font-size="29" fill="#000" text-anchor="middle">2.2</text>
<text x="423.6" y="1675.6" font-family='"Liberation Sans", sans-serif' font-size="29" fill="#000" textLength="199" lengthAdjust="spacingAndGlyphs">4.4 Kilómetros</text>
</g>
<rect x="71.5" y="202.5" width="1818" height="1554" fill="none" stroke="#000" stroke-width="3"/>
<line x1="186.0" y1="194" x2="186.0" y2="202" stroke="#000" stroke-width="1.5"/>
<line x1="183.7" y1="1757" x2="183.7" y2="1765" stroke="#000" stroke-width="1.5"/>
<text x="186.0" y="193.4" font-family='"Liberation Sans", sans-serif' font-size="18.7" text-anchor="middle">510000</text>
<text x="183.7" y="1778.7" font-family='"Liberation Sans", sans-serif' font-size="18.7" text-anchor="middle">510000</text>
<line x1="324.2" y1="194" x2="324.2" y2="202" stroke="#000" stroke-width="1.5"/>
<line x1="321.8" y1="1757" x2="321.8" y2="1765" stroke="#000" stroke-width="1.5"/>
<text x="324.2" y="193.4" font-family='"Liberation Sans", sans-serif' font-size="18.7" text-anchor="middle">512000</text>
<text x="321.8" y="1778.7" font-family='"Liberation Sans", sans-serif' font-size="18.7" text-anchor="middle">512000</text>
<line x1="462.3" y1="194" x2="462.3" y2="202" stroke="#000" stroke-width="1.5"/>
<line x1="460.0" y1="1757" x2="460.0" y2="1765" stroke="#000" stroke-width="1.5"/>
<text x="462.3" y="193.4" font-family='"Liberation Sans", sans-serif' font-size="18.7" text-anchor="middle">514000</text>
<text x="460.0" y="1778.7" font-family='"Liberation Sans", sans-serif' font-size="18.7" text-anchor="middle">514000</text>
<line x1="600.5" y1="194" x2="600.5" y2="202" stroke="#000" stroke-width="1.5"/>
<line x1="598.2" y1="1757" x2="598.2" y2="1765" stroke="#000" stroke-width="1.5"/>
<text x="600.5" y="193.4" font-family='"Liberation Sans", sans-serif' font-size="18.7" text-anchor="middle">516000</text>
<text x="598.2" y="1778.7" font-family='"Liberation Sans", sans-serif' font-size="18.7" text-anchor="middle">516000</text>
<line x1="738.7" y1="194" x2="738.7" y2="202" stroke="#000" stroke-width="1.5"/>
<line x1="736.3" y1="1757" x2="736.3" y2="1765" stroke="#000" stroke-width="1.5"/>
<text x="738.7" y="193.4" font-family='"Liberation Sans", sans-serif' font-size="18.7" text-anchor="middle">518000</text>
<text x="736.3" y="1778.7" font-family='"Liberation Sans", sans-serif' font-size="18.7" text-anchor="middle">518000</text>
<line x1="876.8" y1="194" x2="876.8" y2="202" stroke="#000" stroke-width="1.5"/>
<line x1="874.5" y1="1757" x2="874.5" y2="1765" stroke="#000" stroke-width="1.5"/>
<text x="876.8" y="193.4" font-family='"Liberation Sans", sans-serif' font-size="18.7" text-anchor="middle">520000</text>
<text x="874.5" y="1778.7" font-family='"Liberation Sans", sans-serif' font-size="18.7" text-anchor="middle">520000</text>
<line x1="1015.0" y1="194" x2="1015.0" y2="202" stroke="#000" stroke-width="1.5"/>
<line x1="1012.6" y1="1757" x2="1012.6" y2="1765" stroke="#000" stroke-width="1.5"/>
<text x="1015.0" y="193.4" font-family='"Liberation Sans", sans-serif' font-size="18.7" text-anchor="middle">522000</text>
<text x="1012.6" y="1778.7" font-family='"Liberation Sans", sans-serif' font-size="18.7" text-anchor="middle">522000</text>
<line x1="1153.1" y1="194" x2="1153.1" y2="202" stroke="#000" stroke-width="1.5"/>
<line x1="1150.8" y1="1757" x2="1150.8" y2="1765" stroke="#000" stroke-width="1.5"/>
<text x="1153.1" y="193.4" font-family='"Liberation Sans", sans-serif' font-size="18.7" text-anchor="middle">524000</text>
<text x="1150.8" y="1778.7" font-family='"Liberation Sans", sans-serif' font-size="18.7" text-anchor="middle">524000</text>
<line x1="1291.3" y1="194" x2="1291.3" y2="202" stroke="#000" stroke-width="1.5"/>
<line x1="1289.0" y1="1757" x2="1289.0" y2="1765" stroke="#000" stroke-width="1.5"/>
<text x="1291.3" y="193.4" font-family='"Liberation Sans", sans-serif' font-size="18.7" text-anchor="middle">526000</text>
<text x="1289.0" y="1778.7" font-family='"Liberation Sans", sans-serif' font-size="18.7" text-anchor="middle">526000</text>
<line x1="1429.5" y1="194" x2="1429.5" y2="202" stroke="#000" stroke-width="1.5"/>
<line x1="1427.1" y1="1757" x2="1427.1" y2="1765" stroke="#000" stroke-width="1.5"/>
<text x="1429.5" y="193.4" font-family='"Liberation Sans", sans-serif' font-size="18.7" text-anchor="middle">528000</text>
<text x="1427.1" y="1778.7" font-family='"Liberation Sans", sans-serif' font-size="18.7" text-anchor="middle">528000</text>
<line x1="1567.6" y1="194" x2="1567.6" y2="202" stroke="#000" stroke-width="1.5"/>
<line x1="1565.3" y1="1757" x2="1565.3" y2="1765" stroke="#000" stroke-width="1.5"/>
<text x="1567.6" y="193.4" font-family='"Liberation Sans", sans-serif' font-size="18.7" text-anchor="middle">530000</text>
<text x="1565.3" y="1778.7" font-family='"Liberation Sans", sans-serif' font-size="18.7" text-anchor="middle">530000</text>
<line x1="1705.8" y1="194" x2="1705.8" y2="202" stroke="#000" stroke-width="1.5"/>
<line x1="1703.4" y1="1757" x2="1703.4" y2="1765" stroke="#000" stroke-width="1.5"/>
<text x="1705.8" y="193.4" font-family='"Liberation Sans", sans-serif' font-size="18.7" text-anchor="middle">532000</text>
<text x="1703.4" y="1778.7" font-family='"Liberation Sans", sans-serif' font-size="18.7" text-anchor="middle">532000</text>
<line x1="1843.9" y1="194" x2="1843.9" y2="202" stroke="#000" stroke-width="1.5"/>
<line x1="1841.6" y1="1757" x2="1841.6" y2="1765" stroke="#000" stroke-width="1.5"/>
<text x="1843.9" y="193.4" font-family='"Liberation Sans", sans-serif' font-size="18.7" text-anchor="middle">534000</text>
<text x="1841.6" y="1778.7" font-family='"Liberation Sans", sans-serif' font-size="18.7" text-anchor="middle">534000</text>
<line x1="63" y1="317.4" x2="71" y2="317.4" stroke="#000" stroke-width="1.5"/>
<line x1="1890" y1="320.2" x2="1898" y2="320.2" stroke="#000" stroke-width="1.5"/>
<text transform="translate(61.5,317.4) rotate(-90)" font-family='"Liberation Sans", sans-serif' font-size="18.7" text-anchor="middle">1810000</text>
<text transform="translate(1911,320.2) rotate(-90)" font-family='"Liberation Sans", sans-serif' font-size="18.7" text-anchor="middle">1810000</text>
<line x1="63" y1="450.9" x2="71" y2="450.9" stroke="#000" stroke-width="1.5"/>
<line x1="1890" y1="453.6" x2="1898" y2="453.6" stroke="#000" stroke-width="1.5"/>
<text transform="translate(61.5,450.9) rotate(-90)" font-family='"Liberation Sans", sans-serif' font-size="18.7" text-anchor="middle">1808000</text>
<text transform="translate(1911,453.6) rotate(-90)" font-family='"Liberation Sans", sans-serif' font-size="18.7" text-anchor="middle">1808000</text>
<line x1="63" y1="584.3" x2="71" y2="584.3" stroke="#000" stroke-width="1.5"/>
<line x1="1890" y1="587.0" x2="1898" y2="587.0" stroke="#000" stroke-width="1.5"/>
<text transform="translate(61.5,584.3) rotate(-90)" font-family='"Liberation Sans", sans-serif' font-size="18.7" text-anchor="middle">1806000</text>
<text transform="translate(1911,587.0) rotate(-90)" font-family='"Liberation Sans", sans-serif' font-size="18.7" text-anchor="middle">1806000</text>
<line x1="63" y1="717.7" x2="71" y2="717.7" stroke="#000" stroke-width="1.5"/>
<line x1="1890" y1="720.4" x2="1898" y2="720.4" stroke="#000" stroke-width="1.5"/>
<text transform="translate(61.5,717.7) rotate(-90)" font-family='"Liberation Sans", sans-serif' font-size="18.7" text-anchor="middle">1804000</text>
<text transform="translate(1911,720.4) rotate(-90)" font-family='"Liberation Sans", sans-serif' font-size="18.7" text-anchor="middle">1804000</text>
<line x1="63" y1="851.1" x2="71" y2="851.1" stroke="#000" stroke-width="1.5"/>
<line x1="1890" y1="853.9" x2="1898" y2="853.9" stroke="#000" stroke-width="1.5"/>
<text transform="translate(61.5,851.1) rotate(-90)" font-family='"Liberation Sans", sans-serif' font-size="18.7" text-anchor="middle">1802000</text>
<text transform="translate(1911,853.9) rotate(-90)" font-family='"Liberation Sans", sans-serif' font-size="18.7" text-anchor="middle">1802000</text>
<line x1="63" y1="984.6" x2="71" y2="984.6" stroke="#000" stroke-width="1.5"/>
<line x1="1890" y1="987.3" x2="1898" y2="987.3" stroke="#000" stroke-width="1.5"/>
<text transform="translate(61.5,984.6) rotate(-90)" font-family='"Liberation Sans", sans-serif' font-size="18.7" text-anchor="middle">1800000</text>
<text transform="translate(1911,987.3) rotate(-90)" font-family='"Liberation Sans", sans-serif' font-size="18.7" text-anchor="middle">1800000</text>
<line x1="63" y1="1118.0" x2="71" y2="1118.0" stroke="#000" stroke-width="1.5"/>
<line x1="1890" y1="1120.7" x2="1898" y2="1120.7" stroke="#000" stroke-width="1.5"/>
<text transform="translate(61.5,1118.0) rotate(-90)" font-family='"Liberation Sans", sans-serif' font-size="18.7" text-anchor="middle">1798000</text>
<text transform="translate(1911,1120.7) rotate(-90)" font-family='"Liberation Sans", sans-serif' font-size="18.7" text-anchor="middle">1798000</text>
<line x1="63" y1="1251.4" x2="71" y2="1251.4" stroke="#000" stroke-width="1.5"/>
<line x1="1890" y1="1254.2" x2="1898" y2="1254.2" stroke="#000" stroke-width="1.5"/>
<text transform="translate(61.5,1251.4) rotate(-90)" font-family='"Liberation Sans", sans-serif' font-size="18.7" text-anchor="middle">1796000</text>
<text transform="translate(1911,1254.2) rotate(-90)" font-family='"Liberation Sans", sans-serif' font-size="18.7" text-anchor="middle">1796000</text>
<line x1="63" y1="1384.9" x2="71" y2="1384.9" stroke="#000" stroke-width="1.5"/>
<line x1="1890" y1="1387.6" x2="1898" y2="1387.6" stroke="#000" stroke-width="1.5"/>
<text transform="translate(61.5,1384.9) rotate(-90)" font-family='"Liberation Sans", sans-serif' font-size="18.7" text-anchor="middle">1794000</text>
<text transform="translate(1911,1387.6) rotate(-90)" font-family='"Liberation Sans", sans-serif' font-size="18.7" text-anchor="middle">1794000</text>
<line x1="63" y1="1518.3" x2="71" y2="1518.3" stroke="#000" stroke-width="1.5"/>
<line x1="1890" y1="1521.0" x2="1898" y2="1521.0" stroke="#000" stroke-width="1.5"/>
<text transform="translate(61.5,1518.3) rotate(-90)" font-family='"Liberation Sans", sans-serif' font-size="18.7" text-anchor="middle">1792000</text>
<text transform="translate(1911,1521.0) rotate(-90)" font-family='"Liberation Sans", sans-serif' font-size="18.7" text-anchor="middle">1792000</text>
<line x1="63" y1="1651.7" x2="71" y2="1651.7" stroke="#000" stroke-width="1.5"/>
<line x1="1890" y1="1654.5" x2="1898" y2="1654.5" stroke="#000" stroke-width="1.5"/>
<text transform="translate(61.5,1651.7) rotate(-90)" font-family='"Liberation Sans", sans-serif' font-size="18.7" text-anchor="middle">1790000</text>
<text transform="translate(1911,1654.5) rotate(-90)" font-family='"Liberation Sans", sans-serif' font-size="18.7" text-anchor="middle">1790000</text>
<defs><clipPath id="insclip"><rect x="1951" y="177" width="592" height="549"/></clipPath></defs>
<g clip-path="url(#insclip)"><defs><linearGradient id="pacg" gradientUnits="userSpaceOnUse" x1="2300" y1="600" x2="2200" y2="740"><stop offset="0" stop-color="#b9d7f2"/><stop offset="0.45" stop-color="#a9cbee"/><stop offset="0.75" stop-color="#7ea7d8"/><stop offset="1" stop-color="#6d98cc"/></linearGradient><linearGradient id="carg" gradientUnits="userSpaceOnUse" x1="2410" y1="300" x2="2546" y2="250"><stop offset="0" stop-color="#add0f0"/><stop offset="0.35" stop-color="#9ec4ec"/><stop offset="0.5" stop-color="#7ea8da"/><stop offset="1" stop-color="#86afe0"/></linearGradient><filter id="blur6"><feGaussianBlur stdDeviation="8"/></filter></defs>
<rect x="1951" y="177" width="592" height="549" fill="#e6e9df"/>
<g filter="url(#blur6)" fill="#d3dcc6" opacity="0.8"><ellipse cx="2040" cy="330" rx="85" ry="45" transform="rotate(20 2040 330)"/><ellipse cx="2110" cy="420" rx="70" ry="40" transform="rotate(25 2110 420)"/><ellipse cx="2230" cy="205" rx="110" ry="28"/><ellipse cx="2390" cy="300" rx="30" ry="80"/><ellipse cx="2420" cy="560" rx="70" ry="50"/><ellipse cx="2330" cy="215" rx="60" ry="30"/></g>
<g filter="url(#blur6)" fill="#f1f1ec" opacity="0.9"><ellipse cx="1990" cy="230" rx="50" ry="40"/><ellipse cx="2000" cy="450" rx="40" ry="60"/><ellipse cx="2300" cy="640" rx="50" ry="25"/></g>
<path d="M1951.0,468.0 L2000.0,520.0 L2059.0,573.5 L2102.0,606.0 L2156.0,631.7 L2205.0,631.7 L2253.8,648.0 L2286.0,669.5 L2345.7,676.0 L2416.0,706.0 L2467.5,706.0 L2494.5,698.0 L2521.6,714.0 L2546.0,720.0 L2546.0,730.0 L1951.0,730.0Z" fill="#b1d2f1"/>
<defs><clipPath id="pacclip"><path d="M1951.0,468.0 L2000.0,520.0 L2059.0,573.5 L2102.0,606.0 L2156.0,631.7 L2205.0,631.7 L2253.8,648.0 L2286.0,669.5 L2345.7,676.0 L2416.0,706.0 L2467.5,706.0 L2494.5,698.0 L2521.6,714.0 L2546.0,720.0 L2546.0,730.0 L1951.0,730.0Z"/></clipPath><filter id="blur10" x="-20%" y="-20%" width="140%" height="140%"><feGaussianBlur stdDeviation="10"/></filter></defs>
<g clip-path="url(#pacclip)"><path d="M1940,540 L2040,610 L2150,665 L2300,705 L2560,735 L1940,740 Z" fill="#8db3e0" filter="url(#blur10)"/><path d="M1940,615 L2060,665 L2240,740 L1940,740 Z" fill="#6d98cd" filter="url(#blur10)"/></g>
<path d="M2419.7,174.0 L2546.0,174.0 L2546.0,446.0 L2486.0,435.0 L2458.0,442.0 L2434.0,455.0 L2411.0,452.0 L2400.0,446.0 L2372.0,439.0 L2390.0,420.0 L2416.0,386.0 L2429.0,340.0 L2431.0,290.0 L2441.0,236.0 L2428.0,200.0 L2420.0,190.0Z" fill="url(#carg)"/>
<path d="M2419.7,174 L2478,174 L2466,250 L2455,330 L2445,400 L2430,445 L2372,439 L2390,420 L2416,386 L2429,340 L2431,290 L2441,236 L2428,200 L2420,190 Z" fill="#a9ccee" opacity="0.95"/>
<path d="M2448,174 L2478,174 L2467,214 L2454,246 L2446,300 L2442,250 L2450,215 Z" fill="#e6e9df" stroke="#888" stroke-width="1"/>
<path d="M1951,177 L2016,177 C2010,184 2000,188 1985,188.5 L1960,188 L1951,186 Z" fill="#abcdef" stroke="#777" stroke-width="1.2"/>
<path d="M2090,177 L2148,177 C2140,183 2130,186 2127,189 C2118,189 2108,186 2100,183 L2093,182 Z" fill="#abcdef" stroke="#777" stroke-width="1.2"/>
<path d="M2348,251 L2348,237 L2354,231 L2373,243 L2394,200 L2411,183 L2424,184" fill="none" stroke="#cdcdcd" stroke-width="6" stroke-linejoin="round"/><path d="M2348,251 L2348,237 L2354,231 L2373,243 L2394,200 L2411,183 L2424,184" fill="none" stroke="#777" stroke-width="1.4" stroke-dasharray="7 5"/>
<path d="M1962,230 C1975,215 1990,225 2000,210 C2010,200 2015,195 2018,186 M2030,190 C2050,220 2070,240 2090,250 C2120,265 2135,275 2140,300 M1951,320 C1975,330 1985,340 2000,360 C2010,390 2020,420 2010,440 C2005,460 2030,470 2060,480" fill="none" stroke="#a9c9e8" stroke-width="2"/>
<path d="M1990,404 L2004,400 L2012,410 L2030,416 L2050,428 L2068,440 L2074,452" fill="none" stroke="#a6c8ea" stroke-width="6" stroke-linejoin="round"/><path d="M2005,425 L2030,433 L2040,442" fill="none" stroke="#a6c8ea" stroke-width="7" stroke-linecap="round"/>
<path d="M2175.3,251.0 L2347.4,251.0 L2342.3,438.0 L2373.0,437.5 L2387.0,444.0 L2401.0,433.0 L2411.0,440.0 L2406.0,452.0 L2417.0,447.0 L2434.0,454.0 L2349.0,518.7 L2347.0,553.6 L2312.0,585.0 L2308.8,606.0 L2260.0,640.8 L2254.7,649.6 L2214.5,635.6 L2162.0,632.0 L2123.8,620.0 L2059.2,572.8 L2062.7,569.3 L2062.7,539.6 L2069.7,518.7 L2059.2,497.7 L2071.4,478.5 L2080.0,457.6 L2092.4,434.9 L2102.8,421.8 L2228.5,421.0 L2227.0,385.0 L2222.6,384.0 L2209.0,379.6 L2206.0,367.8 L2199.0,354.5 L2178.0,342.7 L2156.0,328.0 L2148.7,314.6 L2131.0,307.2 L2175.3,307.2Z" fill="#f6bf6b"/>
<path d="M2434.0,454.0 L2349.0,518.7 L2347.0,553.6 L2312.0,585.0 L2308.8,606.0 L2260.0,640.8 L2254.7,649.6" fill="none" stroke="#c9c9c9" stroke-width="6" stroke-linejoin="round" stroke-linecap="round"/>
<path d="M2434.0,454.0 L2349.0,518.7 L2347.0,553.6 L2312.0,585.0 L2308.8,606.0 L2260.0,640.8 L2254.7,649.6" fill="none" stroke="#7a7a7a" stroke-width="1.6" stroke-dasharray="9 6"/>
<path d="M2059.2,572.8 L2062.7,569.3 L2062.7,539.6 L2069.7,518.7 L2059.2,497.7 L2071.4,478.5 L2080.0,457.6 L2092.4,434.9 L2102.8,421.8 L2228.5,421.0 L2227.0,385.0 L2222.6,384.0 L2209.0,379.6 L2206.0,367.8 L2199.0,354.5 L2178.0,342.7 L2156.0,328.0 L2148.7,314.6 L2131.0,307.2 L2175.3,307.2 L2175.3,251.0 L2347.4,251.0" fill="none" stroke="#c9c9c9" stroke-width="6" stroke-linejoin="round" stroke-linecap="round"/>
<path d="M2059.2,572.8 L2062.7,569.3 L2062.7,539.6 L2069.7,518.7 L2059.2,497.7 L2071.4,478.5 L2080.0,457.6 L2092.4,434.9 L2102.8,421.8 L2228.5,421.0 L2227.0,385.0 L2222.6,384.0 L2209.0,379.6 L2206.0,367.8 L2199.0,354.5 L2178.0,342.7 L2156.0,328.0 L2148.7,314.6 L2131.0,307.2 L2175.3,307.2 L2175.3,251.0 L2347.4,251.0" fill="none" stroke="#7a7a7a" stroke-width="1.6" stroke-dasharray="9 6"/>
<path d="M2254.7,649.6 L2214.5,635.6 L2162.0,632.0 L2123.8,620.0 L2059.2,572.8M2373.0,437.5 L2387.0,444.0 L2401.0,433.0 L2411.0,440.0 L2406.0,452.0 L2417.0,447.0 L2434.0,454.0" fill="none" stroke="#6e7070" stroke-width="2"/>
<path d="M2254.7,649.6 L2286,669.5 L2345.7,676 L2416,706 L2467.5,706 L2494.5,698 L2521.6,714 L2546,720" fill="none" stroke="#6e7070" stroke-width="2"/>
<g transform="translate(2040,400) scale(0.17452)"><path d="M1100.0,130.0 L1290.0,160.0 L1390.0,210.0 L1460.0,195.0 L1510.0,255.0 L1555.0,140.0 L1585.0,145.0 L1590.0,245.0 L1640.0,215.0 L1720.0,210.0M700.0,150.0 L730.0,200.0 L690.0,260.0 L680.0,290.0 L610.0,380.0 L600.0,440.0 L620.0,530.0 L600.0,600.0 L630.0,680.0 L640.0,760.0 L700.0,820.0 L720.0,850.0M940.0,150.0 L900.0,190.0 L880.0,300.0 L900.0,350.0 L960.0,390.0 L970.0,460.0 L920.0,500.0 L880.0,560.0 L870.0,640.0 L920.0,720.0 L960.0,780.0M1630.0,245.0 L1560.0,420.0 L1550.0,520.0 L1520.0,630.0M960.0,790.0 L1080.0,770.0 L1200.0,720.0 L1320.0,640.0 L1500.0,640.0 L1650.0,570.0 L1750.0,580.0 L1760.0,690.0M1350.0,640.0 L1420.0,700.0 L1390.0,760.0 L1410.0,830.0M720.0,850.0 L740.0,790.0 L830.0,770.0 L960.0,790.0M150.0,900.0 L260.0,880.0 L340.0,860.0 L380.0,700.0 L430.0,630.0 L470.0,640.0M470.0,640.0 L480.0,760.0 L550.0,820.0 L640.0,790.0 L700.0,820.0M550.0,820.0 L520.0,900.0 L500.0,940.0 L420.0,900.0 L350.0,960.0 L340.0,1050.0 L350.0,1170.0M150.0,960.0 L300.0,990.0 L340.0,980.0M720.0,850.0 L710.0,1000.0 L700.0,1060.0 L650.0,1080.0 L660.0,1170.0M500.0,940.0 L560.0,920.0 L620.0,970.0 L680.0,980.0 L710.0,1000.0M710.0,1050.0 L780.0,1040.0 L840.0,1030.0 L880.0,1070.0 L940.0,1020.0 L990.0,1080.0 L980.0,1140.0 L960.0,1240.0 L950.0,1330.0M480.0,1260.0 L520.0,1150.0 L520.0,1100.0 L600.0,1100.0 L650.0,1100.0 L660.0,1170.0M840.0,1030.0 L880.0,900.0 L930.0,880.0 L950.0,790.0M990.0,1080.0 L1100.0,1010.0 L1160.0,990.0 L1170.0,900.0 L1200.0,880.0 L1280.0,860.0 L1500.0,850.0 L1500.0,960.0 L1560.0,1000.0 L1590.0,1060.0M1170.0,990.0 L1280.0,1040.0 L1370.0,1010.0 L1490.0,990.0M1280.0,1050.0 L1210.0,1110.0 L1270.0,1180.0 L1260.0,1260.0 L1160.0,1300.0 L1190.0,1380.0 L1220.0,1420.0" fill="none" stroke="#6f7171" stroke-width="11" stroke-linejoin="round"/><path d="M1640,460 C1700,420 1780,400 1830,380 C1870,340 1900,300 1960,270 L1950,300 C1900,330 1880,370 1860,420 C1840,470 1780,500 1700,500 C1670,500 1650,480 1640,460 Z" fill="#a8cbee" stroke="#6f7171" stroke-width="9"/></g>
<path d="M2346,251 L2342,438 L2373,438" fill="none" stroke="#8b0a0a" stroke-width="3" stroke-dasharray="6 2 2 2"/>
<text x="2338" y="324" font-family='"Liberation Sans", sans-serif' font-weight="bold" font-size="27" fill="#8b8b8b" stroke="#eee" stroke-width="2" paint-order="stroke">B</text>
<text x="2067" y="507" font-family='"Liberation Sans", sans-serif' font-weight="bold" font-size="29" fill="#8a8a8a" stroke="#f0eee8" stroke-width="3" paint-order="stroke" textLength="221" lengthAdjust="spacing">Guatemala</text>
<text x="2229" y="550" font-family='"Liberation Sans", sans-serif' font-size="22" fill="#555" stroke="#f6f0e0" stroke-width="2" paint-order="stroke" textLength="121.5" lengthAdjust="spacingAndGlyphs">Guatemala</text>
<circle cx="2220.6" cy="561.4" r="6" fill="#a4a4a4" stroke="#fff" stroke-width="1.5"/>
<text x="2355" y="642.5" font-family='"Liberation Sans", sans-serif' font-size="24" fill="#555" textLength="145" lengthAdjust="spacingAndGlyphs">San Salvador</text>
<circle cx="2347" cy="653.3" r="6.5" fill="#a4a4a4" stroke="#fff" stroke-width="1.5"/>
<circle cx="2536.4" cy="611.4" r="6.5" fill="#a4a4a4" stroke="#fff" stroke-width="1.5"/>
<text x="2498" y="553" font-family='"Liberation Sans", sans-serif' font-weight="bold" font-size="27" fill="#8b8b8b" letter-spacing="6">Ho</text>
<text x="1952" y="619.5" font-family='"Liberation Sans", sans-serif' font-style="italic" font-size="19" fill="#222" letter-spacing="2">721</text>
<text x="2518" y="292" font-family='"Liberation Serif", serif' font-style="italic" font-weight="bold" font-size="20" fill="#2a6cb0">Gu</text>
<text x="2535" y="322" font-family='"Liberation Serif", serif' font-style="italic" font-weight="bold" font-size="20" fill="#2a6cb0">d</text>
<text x="2482" y="357" font-family='"Liberation Serif", serif' font-style="italic" font-weight="bold" font-size="20" fill="#2a6cb0" letter-spacing="2">Hond</text>
<rect x="2366" y="281.5" width="147.5" height="67" fill="#fff"/>
<text x="2393" y="300.5" font-family='"Liberation Sans", sans-serif' font-size="18" fill="#000" textLength="93" lengthAdjust="spacingAndGlyphs">Diferendo</text><text x="2381.5" y="323" font-family='"Liberation Sans", sans-serif' font-size="18" fill="#000" textLength="116" lengthAdjust="spacingAndGlyphs">territorial no</text><text x="2402" y="345.5" font-family='"Liberation Sans", sans-serif' font-size="18" fill="#000" textLength="75.6" lengthAdjust="spacingAndGlyphs">resuelto</text>
<rect x="2229" y="391" width="23.5" height="20" fill="none" stroke="#f01414" stroke-width="5.5" rx="1"/></g>
<rect x="1949.5" y="175.5" width="595" height="550" fill="none" stroke="#000" stroke-width="3"/>
<rect x="1948.5" y="890.5" width="595" height="175" fill="#e1e1e1" stroke="#000" stroke-width="3"/>
<text x="1975" y="933.2" font-family='"Liberation Sans", sans-serif' font-size="34" fill="#000" textLength="196" lengthAdjust="spacingAndGlyphs">Simbología</text>
<rect x="1976.5" y="961.5" width="72" height="34" fill="none" stroke="#9c9c9c" stroke-width="3"/>
<text x="2067" y="991" font-family='"Liberation Sans", sans-serif' font-size="34" fill="#000" textLength="385" lengthAdjust="spacingAndGlyphs">Límite Departamental</text>
<rect x="1977.5" y="1020.5" width="70" height="31" rx="2" fill="none" stroke="#44dd11" stroke-width="5"/>
<text x="2067" y="1048.7" font-family='"Liberation Sans", sans-serif' font-size="34" fill="#000" textLength="257" lengthAdjust="spacingAndGlyphs">Área protegida</text>
<rect x="1970.5" y="1544.5" width="568" height="251" fill="#fff" stroke="#000" stroke-width="3"/>
<text x="2123" y="1577.4" font-family='"Liberation Sans", sans-serif' font-size="21.5" font-weight="bold" font-style="italic" fill="#000" lengthAdjust="spacingAndGlyphs" textLength="339">Sistema de coordenadas proyectadas</text>
<text x="2220" y="1604" font-family='"Liberation Sans", sans-serif' font-size="21.5" font-weight="bold" font-style="italic" fill="#000" lengthAdjust="spacingAndGlyphs" textLength="145">Proyección GTM</text>
<text x="2226.8" y="1630.6" font-family='"Liberation Sans", sans-serif' font-size="21.5" font-weight="bold" font-style="italic" fill="#000" lengthAdjust="spacingAndGlyphs" textLength="132">Datum WGS84</text>
<text x="1980" y="1652.4" font-family='"Liberation Sans", sans-serif' font-size="21.5" font-weight="bold" font-style="italic" fill="#000" lengthAdjust="spacingAndGlyphs" textLength="67">Fuente:</text>
<text transform="translate(1980,1679) scale(0.874,1)" font-family='"Liberation Sans", sans-serif' font-size="21.5" font-weight="bold" font-style="italic" fill="#000" word-spacing="7.8">Base de datos de la Dirección Análisis Geoespacial</text>
<text x="1980" y="1705.7" font-family='"Liberation Sans", sans-serif' font-size="21.5" font-weight="bold" font-style="italic" fill="#000" lengthAdjust="spacingAndGlyphs" textLength="111">CONAP 2026</text>
<text x="1980" y="1732.3" font-family='"Liberation Sans", sans-serif' font-size="21.5" font-weight="bold" font-style="italic" fill="#000" lengthAdjust="spacingAndGlyphs" textLength="379">Base de datos cartografía básica IGN 2010</text>
<g transform="translate(40,44) scale(0.065274)">
<rect x="45" y="45" width="1515" height="1165" rx="60" fill="#17a078"/>
<rect x="200" y="160" width="1200" height="940" rx="70" fill="#000"/>
<rect x="235" y="185" width="1165" height="915" rx="60" fill="#fff"/>
<g fill="#000">
<rect x="310" y="958" width="480" height="67" rx="32"/>
<rect x="860" y="958" width="380" height="67" rx="32"/>
<path d="M445,680 C490,600 600,555 760,540 L900,530 C1000,540 1100,600 1180,700 L1200,1000 L490,1000 C480,900 478,780 470,700 Z"/>
<path d="M245,425 L330,425 C370,418 400,392 425,366 L440,382 C410,420 380,450 385,500 C392,560 405,630 425,690 L478,650 C450,585 432,505 432,462 Z"/>
<ellipse cx="840" cy="395" rx="150" ry="140"/>
<path d="M720,378 C660,355 635,420 655,462 C678,505 725,500 745,470 L722,452 C702,470 682,458 682,440 C682,414 700,400 722,410 Z"/>
<path d="M975,268 L1000,262 L1015,390 C1060,440 1120,500 1170,580 L1190,690 L960,520 Z"/>
</g>
<path d="M1182,945 C1200,800 1235,650 1205,520 C1175,420 1125,330 1195,265 C1255,225 1335,265 1315,335 C1295,390 1230,375 1242,330" fill="none" stroke="#000" stroke-width="48" stroke-linecap="round"/>
<circle cx="862" cy="335" r="58" fill="#fff"/><circle cx="862" cy="335" r="18" fill="#000"/>
<path d="M450,680 C540,610 660,630 705,730 C750,840 790,905 870,890 C940,870 960,760 1020,700" fill="none" stroke="#fff" stroke-width="30" stroke-linecap="round"/>
<path d="M955,520 C1050,590 1120,640 1190,715" fill="none" stroke="#fff" stroke-width="24"/>
<path d="M740,548 C820,528 900,528 968,548" fill="none" stroke="#fff" stroke-width="20"/>
<path d="M1160,720 C1160,800 1162,880 1158,945" fill="none" stroke="#fff" stroke-width="20"/>
<path d="M792,1030 L792,915 C805,895 840,892 860,900 L858,1030 Z" fill="#fff"/>
</g>
<text x="43" y="144.7" font-family='"Liberation Serif", serif' font-weight="bold" font-size="29" fill="#17a078" stroke="#17a078" stroke-width="1.6" textLength="98" lengthAdjust="spacingAndGlyphs">CONAP</text><line x1="1889" y1="563" x2="2228" y2="406.5" stroke="#ee1111" stroke-width="3.6"/>
</svg></body></html>
